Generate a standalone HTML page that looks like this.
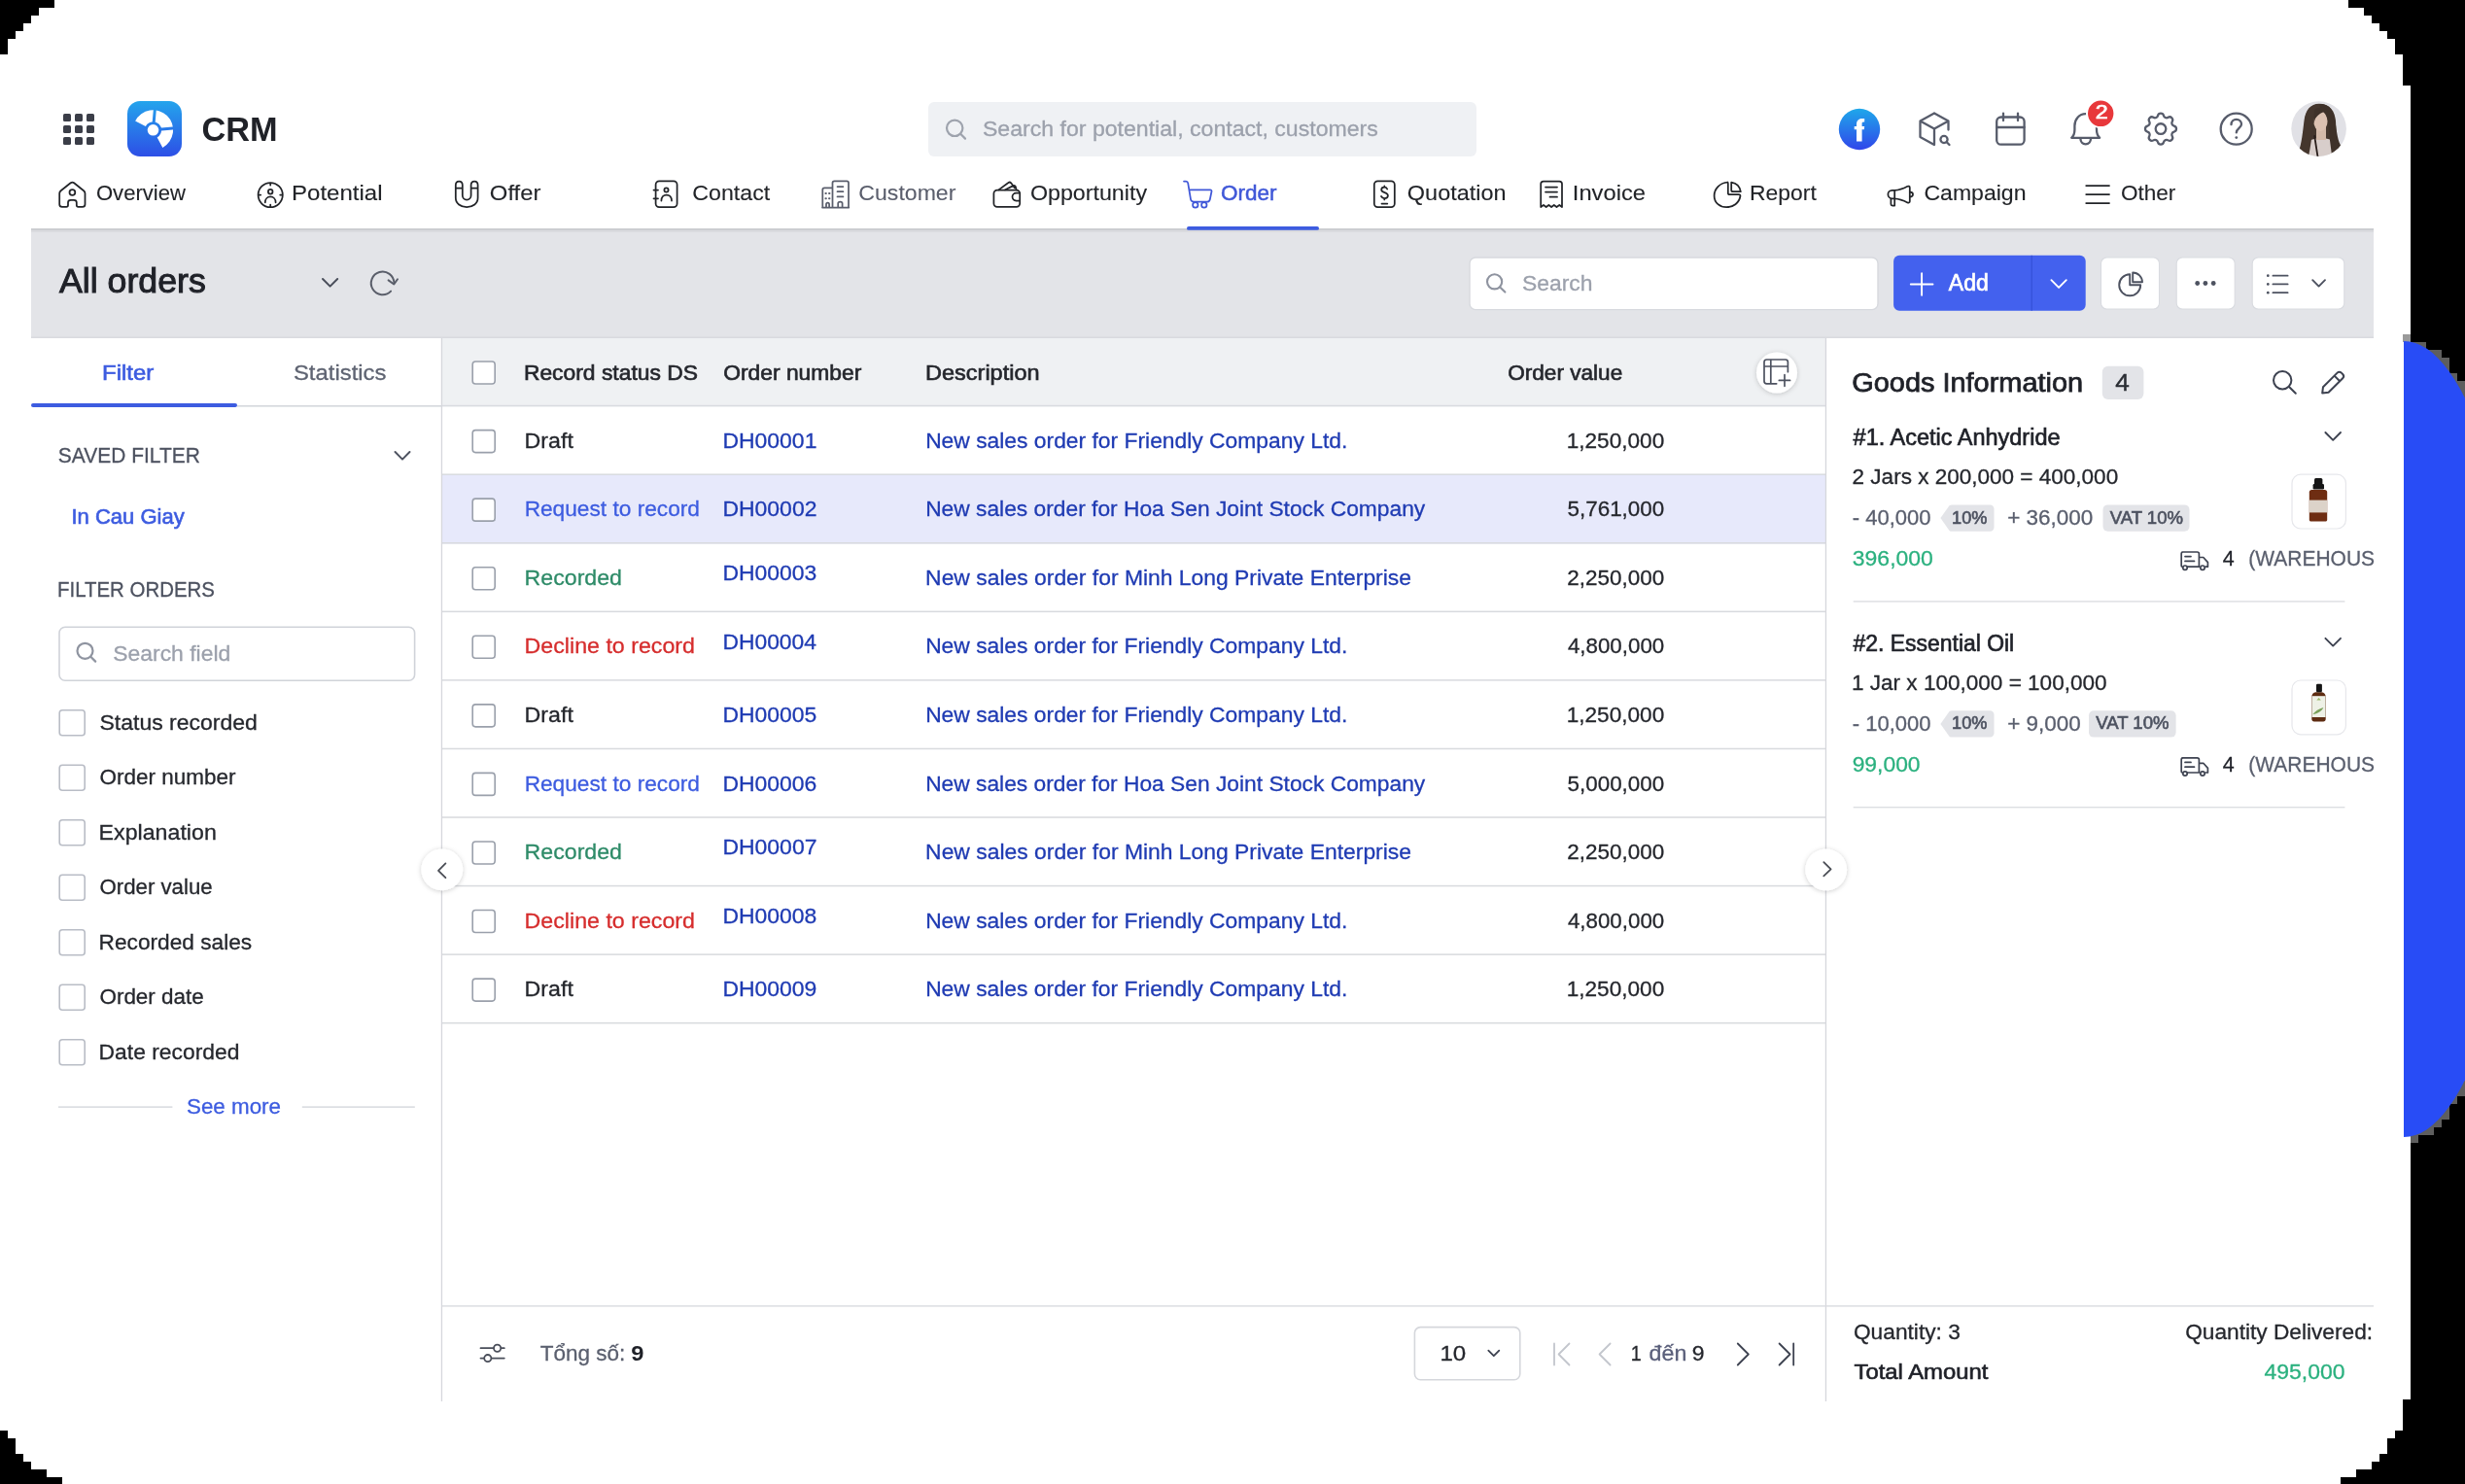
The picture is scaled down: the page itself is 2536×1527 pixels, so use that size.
<!DOCTYPE html>
<html><head><meta charset="utf-8"><title>CRM Orders</title>
<style>html,body{margin:0;padding:0;background:#fff;overflow:hidden;width:2536px;height:1527px}svg{display:block;will-change:transform;font-family:"Liberation Sans",sans-serif}text{white-space:pre}</style>
</head><body>
<svg width="2536" height="1527" viewBox="0 0 2536 1527" font-family='"Liberation Sans", sans-serif'><rect x="0" y="0" width="2536" height="1527" fill="#ffffff"/>
<rect x="0" y="0" width="56" height="8" fill="#000"/>
<rect x="0" y="8" width="40" height="8" fill="#000"/>
<rect x="0" y="16" width="32" height="8" fill="#000"/>
<rect x="0" y="24" width="24" height="8" fill="#000"/>
<rect x="0" y="32" width="16" height="8" fill="#000"/>
<rect x="0" y="40" width="8" height="16" fill="#000"/>
<rect x="0" y="1472" width="8" height="8" fill="#000"/>
<rect x="0" y="1480" width="16" height="16" fill="#000"/>
<rect x="0" y="1496" width="24" height="8" fill="#000"/>
<rect x="0" y="1504" width="32" height="8" fill="#000"/>
<rect x="0" y="1512" width="48" height="8" fill="#000"/>
<rect x="0" y="1520" width="64" height="7" fill="#000"/>
<rect x="2416" y="0" width="120" height="8" fill="#000"/>
<rect x="2432" y="8" width="104" height="8" fill="#000"/>
<rect x="2440" y="16" width="96" height="8" fill="#000"/>
<rect x="2448" y="24" width="88" height="8" fill="#000"/>
<rect x="2456" y="32" width="80" height="8" fill="#000"/>
<rect x="2464" y="40" width="72" height="16" fill="#000"/>
<rect x="2472" y="56" width="64" height="32" fill="#000"/>
<rect x="2480" y="88" width="56" height="1352" fill="#000"/>
<rect x="2472" y="1440" width="64" height="32" fill="#000"/>
<rect x="2464" y="1472" width="72" height="8" fill="#000"/>
<rect x="2456" y="1480" width="80" height="16" fill="#000"/>
<rect x="2448" y="1496" width="88" height="8" fill="#000"/>
<rect x="2440" y="1504" width="96" height="8" fill="#000"/>
<rect x="2424" y="1512" width="112" height="8" fill="#000"/>
<rect x="2408" y="1520" width="128" height="7" fill="#000"/>
<rect x="2480" y="352" width="8" height="8" fill="#5e5e5e"/>
<rect x="2488" y="352" width="8" height="8" fill="#5e5e5e"/>
<rect x="2480" y="360" width="8" height="8" fill="#5e5e5e"/>
<rect x="2488" y="360" width="8" height="8" fill="#5e5e5e"/>
<rect x="2496" y="360" width="8" height="8" fill="#5e5e5e"/>
<rect x="2504" y="360" width="8" height="8" fill="#5e5e5e"/>
<rect x="2480" y="368" width="8" height="8" fill="#5e5e5e"/>
<rect x="2488" y="368" width="8" height="8" fill="#5e5e5e"/>
<rect x="2496" y="368" width="8" height="8" fill="#5e5e5e"/>
<rect x="2504" y="368" width="8" height="8" fill="#5e5e5e"/>
<rect x="2512" y="368" width="8" height="8" fill="#5e5e5e"/>
<rect x="2480" y="376" width="8" height="8" fill="#5e5e5e"/>
<rect x="2488" y="376" width="8" height="8" fill="#5e5e5e"/>
<rect x="2496" y="376" width="8" height="8" fill="#5e5e5e"/>
<rect x="2504" y="376" width="8" height="8" fill="#5e5e5e"/>
<rect x="2512" y="376" width="8" height="8" fill="#5e5e5e"/>
<rect x="2480" y="384" width="8" height="8" fill="#5e5e5e"/>
<rect x="2488" y="384" width="8" height="8" fill="#5e5e5e"/>
<rect x="2496" y="384" width="8" height="8" fill="#5e5e5e"/>
<rect x="2504" y="384" width="8" height="8" fill="#5e5e5e"/>
<rect x="2512" y="384" width="8" height="8" fill="#5e5e5e"/>
<rect x="2520" y="384" width="8" height="8" fill="#5e5e5e"/>
<rect x="2480" y="392" width="8" height="8" fill="#5e5e5e"/>
<rect x="2488" y="392" width="8" height="8" fill="#5e5e5e"/>
<rect x="2496" y="392" width="8" height="8" fill="#5e5e5e"/>
<rect x="2504" y="392" width="8" height="8" fill="#5e5e5e"/>
<rect x="2512" y="392" width="8" height="8" fill="#5e5e5e"/>
<rect x="2520" y="392" width="8" height="8" fill="#5e5e5e"/>
<rect x="2528" y="392" width="8" height="8" fill="#5e5e5e"/>
<rect x="2480" y="400" width="8" height="8" fill="#5e5e5e"/>
<rect x="2488" y="400" width="8" height="8" fill="#5e5e5e"/>
<rect x="2496" y="400" width="8" height="8" fill="#5e5e5e"/>
<rect x="2504" y="400" width="8" height="8" fill="#5e5e5e"/>
<rect x="2512" y="400" width="8" height="8" fill="#5e5e5e"/>
<rect x="2520" y="400" width="8" height="8" fill="#5e5e5e"/>
<rect x="2528" y="400" width="8" height="8" fill="#5e5e5e"/>
<rect x="2480" y="408" width="8" height="8" fill="#5e5e5e"/>
<rect x="2488" y="408" width="8" height="8" fill="#5e5e5e"/>
<rect x="2496" y="408" width="8" height="8" fill="#5e5e5e"/>
<rect x="2504" y="408" width="8" height="8" fill="#5e5e5e"/>
<rect x="2512" y="408" width="8" height="8" fill="#5e5e5e"/>
<rect x="2520" y="408" width="8" height="8" fill="#5e5e5e"/>
<rect x="2528" y="408" width="8" height="8" fill="#5e5e5e"/>
<rect x="2480" y="416" width="8" height="8" fill="#5e5e5e"/>
<rect x="2488" y="416" width="8" height="8" fill="#5e5e5e"/>
<rect x="2496" y="416" width="8" height="8" fill="#5e5e5e"/>
<rect x="2504" y="416" width="8" height="8" fill="#5e5e5e"/>
<rect x="2512" y="416" width="8" height="8" fill="#5e5e5e"/>
<rect x="2520" y="416" width="8" height="8" fill="#5e5e5e"/>
<rect x="2528" y="416" width="8" height="8" fill="#5e5e5e"/>
<rect x="2480" y="424" width="8" height="8" fill="#5e5e5e"/>
<rect x="2488" y="424" width="8" height="8" fill="#5e5e5e"/>
<rect x="2496" y="424" width="8" height="8" fill="#5e5e5e"/>
<rect x="2504" y="424" width="8" height="8" fill="#5e5e5e"/>
<rect x="2512" y="424" width="8" height="8" fill="#5e5e5e"/>
<rect x="2520" y="424" width="8" height="8" fill="#5e5e5e"/>
<rect x="2528" y="424" width="8" height="8" fill="#5e5e5e"/>
<rect x="2480" y="432" width="8" height="8" fill="#5e5e5e"/>
<rect x="2488" y="432" width="8" height="8" fill="#5e5e5e"/>
<rect x="2496" y="432" width="8" height="8" fill="#5e5e5e"/>
<rect x="2504" y="432" width="8" height="8" fill="#5e5e5e"/>
<rect x="2512" y="432" width="8" height="8" fill="#5e5e5e"/>
<rect x="2520" y="432" width="8" height="8" fill="#5e5e5e"/>
<rect x="2528" y="432" width="8" height="8" fill="#5e5e5e"/>
<rect x="2480" y="440" width="8" height="8" fill="#5e5e5e"/>
<rect x="2488" y="440" width="8" height="8" fill="#5e5e5e"/>
<rect x="2496" y="440" width="8" height="8" fill="#5e5e5e"/>
<rect x="2504" y="440" width="8" height="8" fill="#5e5e5e"/>
<rect x="2512" y="440" width="8" height="8" fill="#5e5e5e"/>
<rect x="2520" y="440" width="8" height="8" fill="#5e5e5e"/>
<rect x="2528" y="440" width="8" height="8" fill="#5e5e5e"/>
<rect x="2480" y="448" width="8" height="8" fill="#5e5e5e"/>
<rect x="2488" y="448" width="8" height="8" fill="#5e5e5e"/>
<rect x="2496" y="448" width="8" height="8" fill="#5e5e5e"/>
<rect x="2504" y="448" width="8" height="8" fill="#5e5e5e"/>
<rect x="2512" y="448" width="8" height="8" fill="#5e5e5e"/>
<rect x="2520" y="448" width="8" height="8" fill="#5e5e5e"/>
<rect x="2528" y="448" width="8" height="8" fill="#5e5e5e"/>
<rect x="2480" y="456" width="8" height="8" fill="#5e5e5e"/>
<rect x="2488" y="456" width="8" height="8" fill="#5e5e5e"/>
<rect x="2496" y="456" width="8" height="8" fill="#5e5e5e"/>
<rect x="2504" y="456" width="8" height="8" fill="#5e5e5e"/>
<rect x="2512" y="456" width="8" height="8" fill="#5e5e5e"/>
<rect x="2520" y="456" width="8" height="8" fill="#5e5e5e"/>
<rect x="2528" y="456" width="8" height="8" fill="#5e5e5e"/>
<rect x="2480" y="464" width="8" height="8" fill="#5e5e5e"/>
<rect x="2488" y="464" width="8" height="8" fill="#5e5e5e"/>
<rect x="2496" y="464" width="8" height="8" fill="#5e5e5e"/>
<rect x="2504" y="464" width="8" height="8" fill="#5e5e5e"/>
<rect x="2512" y="464" width="8" height="8" fill="#5e5e5e"/>
<rect x="2520" y="464" width="8" height="8" fill="#5e5e5e"/>
<rect x="2528" y="464" width="8" height="8" fill="#5e5e5e"/>
<rect x="2480" y="472" width="8" height="8" fill="#5e5e5e"/>
<rect x="2488" y="472" width="8" height="8" fill="#5e5e5e"/>
<rect x="2496" y="472" width="8" height="8" fill="#5e5e5e"/>
<rect x="2504" y="472" width="8" height="8" fill="#5e5e5e"/>
<rect x="2512" y="472" width="8" height="8" fill="#5e5e5e"/>
<rect x="2520" y="472" width="8" height="8" fill="#5e5e5e"/>
<rect x="2528" y="472" width="8" height="8" fill="#5e5e5e"/>
<rect x="2480" y="480" width="8" height="8" fill="#5e5e5e"/>
<rect x="2488" y="480" width="8" height="8" fill="#5e5e5e"/>
<rect x="2496" y="480" width="8" height="8" fill="#5e5e5e"/>
<rect x="2504" y="480" width="8" height="8" fill="#5e5e5e"/>
<rect x="2512" y="480" width="8" height="8" fill="#5e5e5e"/>
<rect x="2520" y="480" width="8" height="8" fill="#5e5e5e"/>
<rect x="2528" y="480" width="8" height="8" fill="#5e5e5e"/>
<rect x="2480" y="488" width="8" height="8" fill="#5e5e5e"/>
<rect x="2488" y="488" width="8" height="8" fill="#5e5e5e"/>
<rect x="2496" y="488" width="8" height="8" fill="#5e5e5e"/>
<rect x="2504" y="488" width="8" height="8" fill="#5e5e5e"/>
<rect x="2512" y="488" width="8" height="8" fill="#5e5e5e"/>
<rect x="2520" y="488" width="8" height="8" fill="#5e5e5e"/>
<rect x="2528" y="488" width="8" height="8" fill="#5e5e5e"/>
<rect x="2480" y="496" width="8" height="8" fill="#5e5e5e"/>
<rect x="2488" y="496" width="8" height="8" fill="#5e5e5e"/>
<rect x="2496" y="496" width="8" height="8" fill="#5e5e5e"/>
<rect x="2504" y="496" width="8" height="8" fill="#5e5e5e"/>
<rect x="2512" y="496" width="8" height="8" fill="#5e5e5e"/>
<rect x="2520" y="496" width="8" height="8" fill="#5e5e5e"/>
<rect x="2528" y="496" width="8" height="8" fill="#5e5e5e"/>
<rect x="2480" y="504" width="8" height="8" fill="#5e5e5e"/>
<rect x="2488" y="504" width="8" height="8" fill="#5e5e5e"/>
<rect x="2496" y="504" width="8" height="8" fill="#5e5e5e"/>
<rect x="2504" y="504" width="8" height="8" fill="#5e5e5e"/>
<rect x="2512" y="504" width="8" height="8" fill="#5e5e5e"/>
<rect x="2520" y="504" width="8" height="8" fill="#5e5e5e"/>
<rect x="2528" y="504" width="8" height="8" fill="#5e5e5e"/>
<rect x="2480" y="512" width="8" height="8" fill="#5e5e5e"/>
<rect x="2488" y="512" width="8" height="8" fill="#5e5e5e"/>
<rect x="2496" y="512" width="8" height="8" fill="#5e5e5e"/>
<rect x="2504" y="512" width="8" height="8" fill="#5e5e5e"/>
<rect x="2512" y="512" width="8" height="8" fill="#5e5e5e"/>
<rect x="2520" y="512" width="8" height="8" fill="#5e5e5e"/>
<rect x="2528" y="512" width="8" height="8" fill="#5e5e5e"/>
<rect x="2480" y="520" width="8" height="8" fill="#5e5e5e"/>
<rect x="2488" y="520" width="8" height="8" fill="#5e5e5e"/>
<rect x="2496" y="520" width="8" height="8" fill="#5e5e5e"/>
<rect x="2504" y="520" width="8" height="8" fill="#5e5e5e"/>
<rect x="2512" y="520" width="8" height="8" fill="#5e5e5e"/>
<rect x="2520" y="520" width="8" height="8" fill="#5e5e5e"/>
<rect x="2528" y="520" width="8" height="8" fill="#5e5e5e"/>
<rect x="2480" y="528" width="8" height="8" fill="#5e5e5e"/>
<rect x="2488" y="528" width="8" height="8" fill="#5e5e5e"/>
<rect x="2496" y="528" width="8" height="8" fill="#5e5e5e"/>
<rect x="2504" y="528" width="8" height="8" fill="#5e5e5e"/>
<rect x="2512" y="528" width="8" height="8" fill="#5e5e5e"/>
<rect x="2520" y="528" width="8" height="8" fill="#5e5e5e"/>
<rect x="2528" y="528" width="8" height="8" fill="#5e5e5e"/>
<rect x="2480" y="536" width="8" height="8" fill="#5e5e5e"/>
<rect x="2488" y="536" width="8" height="8" fill="#5e5e5e"/>
<rect x="2496" y="536" width="8" height="8" fill="#5e5e5e"/>
<rect x="2504" y="536" width="8" height="8" fill="#5e5e5e"/>
<rect x="2512" y="536" width="8" height="8" fill="#5e5e5e"/>
<rect x="2520" y="536" width="8" height="8" fill="#5e5e5e"/>
<rect x="2528" y="536" width="8" height="8" fill="#5e5e5e"/>
<rect x="2480" y="544" width="8" height="8" fill="#5e5e5e"/>
<rect x="2488" y="544" width="8" height="8" fill="#5e5e5e"/>
<rect x="2496" y="544" width="8" height="8" fill="#5e5e5e"/>
<rect x="2504" y="544" width="8" height="8" fill="#5e5e5e"/>
<rect x="2512" y="544" width="8" height="8" fill="#5e5e5e"/>
<rect x="2520" y="544" width="8" height="8" fill="#5e5e5e"/>
<rect x="2528" y="544" width="8" height="8" fill="#5e5e5e"/>
<rect x="2480" y="552" width="8" height="8" fill="#5e5e5e"/>
<rect x="2488" y="552" width="8" height="8" fill="#5e5e5e"/>
<rect x="2496" y="552" width="8" height="8" fill="#5e5e5e"/>
<rect x="2504" y="552" width="8" height="8" fill="#5e5e5e"/>
<rect x="2512" y="552" width="8" height="8" fill="#5e5e5e"/>
<rect x="2520" y="552" width="8" height="8" fill="#5e5e5e"/>
<rect x="2528" y="552" width="8" height="8" fill="#5e5e5e"/>
<rect x="2480" y="560" width="8" height="8" fill="#5e5e5e"/>
<rect x="2488" y="560" width="8" height="8" fill="#5e5e5e"/>
<rect x="2496" y="560" width="8" height="8" fill="#5e5e5e"/>
<rect x="2504" y="560" width="8" height="8" fill="#5e5e5e"/>
<rect x="2512" y="560" width="8" height="8" fill="#5e5e5e"/>
<rect x="2520" y="560" width="8" height="8" fill="#5e5e5e"/>
<rect x="2528" y="560" width="8" height="8" fill="#5e5e5e"/>
<rect x="2480" y="568" width="8" height="8" fill="#5e5e5e"/>
<rect x="2488" y="568" width="8" height="8" fill="#5e5e5e"/>
<rect x="2496" y="568" width="8" height="8" fill="#5e5e5e"/>
<rect x="2504" y="568" width="8" height="8" fill="#5e5e5e"/>
<rect x="2512" y="568" width="8" height="8" fill="#5e5e5e"/>
<rect x="2520" y="568" width="8" height="8" fill="#5e5e5e"/>
<rect x="2528" y="568" width="8" height="8" fill="#5e5e5e"/>
<rect x="2480" y="576" width="8" height="8" fill="#5e5e5e"/>
<rect x="2488" y="576" width="8" height="8" fill="#5e5e5e"/>
<rect x="2496" y="576" width="8" height="8" fill="#5e5e5e"/>
<rect x="2504" y="576" width="8" height="8" fill="#5e5e5e"/>
<rect x="2512" y="576" width="8" height="8" fill="#5e5e5e"/>
<rect x="2520" y="576" width="8" height="8" fill="#5e5e5e"/>
<rect x="2528" y="576" width="8" height="8" fill="#5e5e5e"/>
<rect x="2480" y="584" width="8" height="8" fill="#5e5e5e"/>
<rect x="2488" y="584" width="8" height="8" fill="#5e5e5e"/>
<rect x="2496" y="584" width="8" height="8" fill="#5e5e5e"/>
<rect x="2504" y="584" width="8" height="8" fill="#5e5e5e"/>
<rect x="2512" y="584" width="8" height="8" fill="#5e5e5e"/>
<rect x="2520" y="584" width="8" height="8" fill="#5e5e5e"/>
<rect x="2528" y="584" width="8" height="8" fill="#5e5e5e"/>
<rect x="2480" y="592" width="8" height="8" fill="#5e5e5e"/>
<rect x="2488" y="592" width="8" height="8" fill="#5e5e5e"/>
<rect x="2496" y="592" width="8" height="8" fill="#5e5e5e"/>
<rect x="2504" y="592" width="8" height="8" fill="#5e5e5e"/>
<rect x="2512" y="592" width="8" height="8" fill="#5e5e5e"/>
<rect x="2520" y="592" width="8" height="8" fill="#5e5e5e"/>
<rect x="2528" y="592" width="8" height="8" fill="#5e5e5e"/>
<rect x="2480" y="600" width="8" height="8" fill="#5e5e5e"/>
<rect x="2488" y="600" width="8" height="8" fill="#5e5e5e"/>
<rect x="2496" y="600" width="8" height="8" fill="#5e5e5e"/>
<rect x="2504" y="600" width="8" height="8" fill="#5e5e5e"/>
<rect x="2512" y="600" width="8" height="8" fill="#5e5e5e"/>
<rect x="2520" y="600" width="8" height="8" fill="#5e5e5e"/>
<rect x="2528" y="600" width="8" height="8" fill="#5e5e5e"/>
<rect x="2480" y="608" width="8" height="8" fill="#5e5e5e"/>
<rect x="2488" y="608" width="8" height="8" fill="#5e5e5e"/>
<rect x="2496" y="608" width="8" height="8" fill="#5e5e5e"/>
<rect x="2504" y="608" width="8" height="8" fill="#5e5e5e"/>
<rect x="2512" y="608" width="8" height="8" fill="#5e5e5e"/>
<rect x="2520" y="608" width="8" height="8" fill="#5e5e5e"/>
<rect x="2528" y="608" width="8" height="8" fill="#5e5e5e"/>
<rect x="2480" y="616" width="8" height="8" fill="#5e5e5e"/>
<rect x="2488" y="616" width="8" height="8" fill="#5e5e5e"/>
<rect x="2496" y="616" width="8" height="8" fill="#5e5e5e"/>
<rect x="2504" y="616" width="8" height="8" fill="#5e5e5e"/>
<rect x="2512" y="616" width="8" height="8" fill="#5e5e5e"/>
<rect x="2520" y="616" width="8" height="8" fill="#5e5e5e"/>
<rect x="2528" y="616" width="8" height="8" fill="#5e5e5e"/>
<rect x="2480" y="624" width="8" height="8" fill="#5e5e5e"/>
<rect x="2488" y="624" width="8" height="8" fill="#5e5e5e"/>
<rect x="2496" y="624" width="8" height="8" fill="#5e5e5e"/>
<rect x="2504" y="624" width="8" height="8" fill="#5e5e5e"/>
<rect x="2512" y="624" width="8" height="8" fill="#5e5e5e"/>
<rect x="2520" y="624" width="8" height="8" fill="#5e5e5e"/>
<rect x="2528" y="624" width="8" height="8" fill="#5e5e5e"/>
<rect x="2480" y="632" width="8" height="8" fill="#5e5e5e"/>
<rect x="2488" y="632" width="8" height="8" fill="#5e5e5e"/>
<rect x="2496" y="632" width="8" height="8" fill="#5e5e5e"/>
<rect x="2504" y="632" width="8" height="8" fill="#5e5e5e"/>
<rect x="2512" y="632" width="8" height="8" fill="#5e5e5e"/>
<rect x="2520" y="632" width="8" height="8" fill="#5e5e5e"/>
<rect x="2528" y="632" width="8" height="8" fill="#5e5e5e"/>
<rect x="2480" y="640" width="8" height="8" fill="#5e5e5e"/>
<rect x="2488" y="640" width="8" height="8" fill="#5e5e5e"/>
<rect x="2496" y="640" width="8" height="8" fill="#5e5e5e"/>
<rect x="2504" y="640" width="8" height="8" fill="#5e5e5e"/>
<rect x="2512" y="640" width="8" height="8" fill="#5e5e5e"/>
<rect x="2520" y="640" width="8" height="8" fill="#5e5e5e"/>
<rect x="2528" y="640" width="8" height="8" fill="#5e5e5e"/>
<rect x="2480" y="648" width="8" height="8" fill="#5e5e5e"/>
<rect x="2488" y="648" width="8" height="8" fill="#5e5e5e"/>
<rect x="2496" y="648" width="8" height="8" fill="#5e5e5e"/>
<rect x="2504" y="648" width="8" height="8" fill="#5e5e5e"/>
<rect x="2512" y="648" width="8" height="8" fill="#5e5e5e"/>
<rect x="2520" y="648" width="8" height="8" fill="#5e5e5e"/>
<rect x="2528" y="648" width="8" height="8" fill="#5e5e5e"/>
<rect x="2480" y="656" width="8" height="8" fill="#5e5e5e"/>
<rect x="2488" y="656" width="8" height="8" fill="#5e5e5e"/>
<rect x="2496" y="656" width="8" height="8" fill="#5e5e5e"/>
<rect x="2504" y="656" width="8" height="8" fill="#5e5e5e"/>
<rect x="2512" y="656" width="8" height="8" fill="#5e5e5e"/>
<rect x="2520" y="656" width="8" height="8" fill="#5e5e5e"/>
<rect x="2528" y="656" width="8" height="8" fill="#5e5e5e"/>
<rect x="2480" y="664" width="8" height="8" fill="#5e5e5e"/>
<rect x="2488" y="664" width="8" height="8" fill="#5e5e5e"/>
<rect x="2496" y="664" width="8" height="8" fill="#5e5e5e"/>
<rect x="2504" y="664" width="8" height="8" fill="#5e5e5e"/>
<rect x="2512" y="664" width="8" height="8" fill="#5e5e5e"/>
<rect x="2520" y="664" width="8" height="8" fill="#5e5e5e"/>
<rect x="2528" y="664" width="8" height="8" fill="#5e5e5e"/>
<rect x="2480" y="672" width="8" height="8" fill="#5e5e5e"/>
<rect x="2488" y="672" width="8" height="8" fill="#5e5e5e"/>
<rect x="2496" y="672" width="8" height="8" fill="#5e5e5e"/>
<rect x="2504" y="672" width="8" height="8" fill="#5e5e5e"/>
<rect x="2512" y="672" width="8" height="8" fill="#5e5e5e"/>
<rect x="2520" y="672" width="8" height="8" fill="#5e5e5e"/>
<rect x="2528" y="672" width="8" height="8" fill="#5e5e5e"/>
<rect x="2480" y="680" width="8" height="8" fill="#5e5e5e"/>
<rect x="2488" y="680" width="8" height="8" fill="#5e5e5e"/>
<rect x="2496" y="680" width="8" height="8" fill="#5e5e5e"/>
<rect x="2504" y="680" width="8" height="8" fill="#5e5e5e"/>
<rect x="2512" y="680" width="8" height="8" fill="#5e5e5e"/>
<rect x="2520" y="680" width="8" height="8" fill="#5e5e5e"/>
<rect x="2528" y="680" width="8" height="8" fill="#5e5e5e"/>
<rect x="2480" y="688" width="8" height="8" fill="#5e5e5e"/>
<rect x="2488" y="688" width="8" height="8" fill="#5e5e5e"/>
<rect x="2496" y="688" width="8" height="8" fill="#5e5e5e"/>
<rect x="2504" y="688" width="8" height="8" fill="#5e5e5e"/>
<rect x="2512" y="688" width="8" height="8" fill="#5e5e5e"/>
<rect x="2520" y="688" width="8" height="8" fill="#5e5e5e"/>
<rect x="2528" y="688" width="8" height="8" fill="#5e5e5e"/>
<rect x="2480" y="696" width="8" height="8" fill="#5e5e5e"/>
<rect x="2488" y="696" width="8" height="8" fill="#5e5e5e"/>
<rect x="2496" y="696" width="8" height="8" fill="#5e5e5e"/>
<rect x="2504" y="696" width="8" height="8" fill="#5e5e5e"/>
<rect x="2512" y="696" width="8" height="8" fill="#5e5e5e"/>
<rect x="2520" y="696" width="8" height="8" fill="#5e5e5e"/>
<rect x="2528" y="696" width="8" height="8" fill="#5e5e5e"/>
<rect x="2480" y="704" width="8" height="8" fill="#5e5e5e"/>
<rect x="2488" y="704" width="8" height="8" fill="#5e5e5e"/>
<rect x="2496" y="704" width="8" height="8" fill="#5e5e5e"/>
<rect x="2504" y="704" width="8" height="8" fill="#5e5e5e"/>
<rect x="2512" y="704" width="8" height="8" fill="#5e5e5e"/>
<rect x="2520" y="704" width="8" height="8" fill="#5e5e5e"/>
<rect x="2528" y="704" width="8" height="8" fill="#5e5e5e"/>
<rect x="2480" y="712" width="8" height="8" fill="#5e5e5e"/>
<rect x="2488" y="712" width="8" height="8" fill="#5e5e5e"/>
<rect x="2496" y="712" width="8" height="8" fill="#5e5e5e"/>
<rect x="2504" y="712" width="8" height="8" fill="#5e5e5e"/>
<rect x="2512" y="712" width="8" height="8" fill="#5e5e5e"/>
<rect x="2520" y="712" width="8" height="8" fill="#5e5e5e"/>
<rect x="2528" y="712" width="8" height="8" fill="#5e5e5e"/>
<rect x="2480" y="720" width="8" height="8" fill="#5e5e5e"/>
<rect x="2488" y="720" width="8" height="8" fill="#5e5e5e"/>
<rect x="2496" y="720" width="8" height="8" fill="#5e5e5e"/>
<rect x="2504" y="720" width="8" height="8" fill="#5e5e5e"/>
<rect x="2512" y="720" width="8" height="8" fill="#5e5e5e"/>
<rect x="2520" y="720" width="8" height="8" fill="#5e5e5e"/>
<rect x="2528" y="720" width="8" height="8" fill="#5e5e5e"/>
<rect x="2480" y="728" width="8" height="8" fill="#5e5e5e"/>
<rect x="2488" y="728" width="8" height="8" fill="#5e5e5e"/>
<rect x="2496" y="728" width="8" height="8" fill="#5e5e5e"/>
<rect x="2504" y="728" width="8" height="8" fill="#5e5e5e"/>
<rect x="2512" y="728" width="8" height="8" fill="#5e5e5e"/>
<rect x="2520" y="728" width="8" height="8" fill="#5e5e5e"/>
<rect x="2528" y="728" width="8" height="8" fill="#5e5e5e"/>
<rect x="2480" y="736" width="8" height="8" fill="#5e5e5e"/>
<rect x="2488" y="736" width="8" height="8" fill="#5e5e5e"/>
<rect x="2496" y="736" width="8" height="8" fill="#5e5e5e"/>
<rect x="2504" y="736" width="8" height="8" fill="#5e5e5e"/>
<rect x="2512" y="736" width="8" height="8" fill="#5e5e5e"/>
<rect x="2520" y="736" width="8" height="8" fill="#5e5e5e"/>
<rect x="2528" y="736" width="8" height="8" fill="#5e5e5e"/>
<rect x="2480" y="744" width="8" height="8" fill="#5e5e5e"/>
<rect x="2488" y="744" width="8" height="8" fill="#5e5e5e"/>
<rect x="2496" y="744" width="8" height="8" fill="#5e5e5e"/>
<rect x="2504" y="744" width="8" height="8" fill="#5e5e5e"/>
<rect x="2512" y="744" width="8" height="8" fill="#5e5e5e"/>
<rect x="2520" y="744" width="8" height="8" fill="#5e5e5e"/>
<rect x="2528" y="744" width="8" height="8" fill="#5e5e5e"/>
<rect x="2480" y="752" width="8" height="8" fill="#5e5e5e"/>
<rect x="2488" y="752" width="8" height="8" fill="#5e5e5e"/>
<rect x="2496" y="752" width="8" height="8" fill="#5e5e5e"/>
<rect x="2504" y="752" width="8" height="8" fill="#5e5e5e"/>
<rect x="2512" y="752" width="8" height="8" fill="#5e5e5e"/>
<rect x="2520" y="752" width="8" height="8" fill="#5e5e5e"/>
<rect x="2528" y="752" width="8" height="8" fill="#5e5e5e"/>
<rect x="2480" y="760" width="8" height="8" fill="#5e5e5e"/>
<rect x="2488" y="760" width="8" height="8" fill="#5e5e5e"/>
<rect x="2496" y="760" width="8" height="8" fill="#5e5e5e"/>
<rect x="2504" y="760" width="8" height="8" fill="#5e5e5e"/>
<rect x="2512" y="760" width="8" height="8" fill="#5e5e5e"/>
<rect x="2520" y="760" width="8" height="8" fill="#5e5e5e"/>
<rect x="2528" y="760" width="8" height="8" fill="#5e5e5e"/>
<rect x="2480" y="768" width="8" height="8" fill="#5e5e5e"/>
<rect x="2488" y="768" width="8" height="8" fill="#5e5e5e"/>
<rect x="2496" y="768" width="8" height="8" fill="#5e5e5e"/>
<rect x="2504" y="768" width="8" height="8" fill="#5e5e5e"/>
<rect x="2512" y="768" width="8" height="8" fill="#5e5e5e"/>
<rect x="2520" y="768" width="8" height="8" fill="#5e5e5e"/>
<rect x="2528" y="768" width="8" height="8" fill="#5e5e5e"/>
<rect x="2480" y="776" width="8" height="8" fill="#5e5e5e"/>
<rect x="2488" y="776" width="8" height="8" fill="#5e5e5e"/>
<rect x="2496" y="776" width="8" height="8" fill="#5e5e5e"/>
<rect x="2504" y="776" width="8" height="8" fill="#5e5e5e"/>
<rect x="2512" y="776" width="8" height="8" fill="#5e5e5e"/>
<rect x="2520" y="776" width="8" height="8" fill="#5e5e5e"/>
<rect x="2528" y="776" width="8" height="8" fill="#5e5e5e"/>
<rect x="2480" y="784" width="8" height="8" fill="#5e5e5e"/>
<rect x="2488" y="784" width="8" height="8" fill="#5e5e5e"/>
<rect x="2496" y="784" width="8" height="8" fill="#5e5e5e"/>
<rect x="2504" y="784" width="8" height="8" fill="#5e5e5e"/>
<rect x="2512" y="784" width="8" height="8" fill="#5e5e5e"/>
<rect x="2520" y="784" width="8" height="8" fill="#5e5e5e"/>
<rect x="2528" y="784" width="8" height="8" fill="#5e5e5e"/>
<rect x="2480" y="792" width="8" height="8" fill="#5e5e5e"/>
<rect x="2488" y="792" width="8" height="8" fill="#5e5e5e"/>
<rect x="2496" y="792" width="8" height="8" fill="#5e5e5e"/>
<rect x="2504" y="792" width="8" height="8" fill="#5e5e5e"/>
<rect x="2512" y="792" width="8" height="8" fill="#5e5e5e"/>
<rect x="2520" y="792" width="8" height="8" fill="#5e5e5e"/>
<rect x="2528" y="792" width="8" height="8" fill="#5e5e5e"/>
<rect x="2480" y="800" width="8" height="8" fill="#5e5e5e"/>
<rect x="2488" y="800" width="8" height="8" fill="#5e5e5e"/>
<rect x="2496" y="800" width="8" height="8" fill="#5e5e5e"/>
<rect x="2504" y="800" width="8" height="8" fill="#5e5e5e"/>
<rect x="2512" y="800" width="8" height="8" fill="#5e5e5e"/>
<rect x="2520" y="800" width="8" height="8" fill="#5e5e5e"/>
<rect x="2528" y="800" width="8" height="8" fill="#5e5e5e"/>
<rect x="2480" y="808" width="8" height="8" fill="#5e5e5e"/>
<rect x="2488" y="808" width="8" height="8" fill="#5e5e5e"/>
<rect x="2496" y="808" width="8" height="8" fill="#5e5e5e"/>
<rect x="2504" y="808" width="8" height="8" fill="#5e5e5e"/>
<rect x="2512" y="808" width="8" height="8" fill="#5e5e5e"/>
<rect x="2520" y="808" width="8" height="8" fill="#5e5e5e"/>
<rect x="2528" y="808" width="8" height="8" fill="#5e5e5e"/>
<rect x="2480" y="816" width="8" height="8" fill="#5e5e5e"/>
<rect x="2488" y="816" width="8" height="8" fill="#5e5e5e"/>
<rect x="2496" y="816" width="8" height="8" fill="#5e5e5e"/>
<rect x="2504" y="816" width="8" height="8" fill="#5e5e5e"/>
<rect x="2512" y="816" width="8" height="8" fill="#5e5e5e"/>
<rect x="2520" y="816" width="8" height="8" fill="#5e5e5e"/>
<rect x="2528" y="816" width="8" height="8" fill="#5e5e5e"/>
<rect x="2480" y="824" width="8" height="8" fill="#5e5e5e"/>
<rect x="2488" y="824" width="8" height="8" fill="#5e5e5e"/>
<rect x="2496" y="824" width="8" height="8" fill="#5e5e5e"/>
<rect x="2504" y="824" width="8" height="8" fill="#5e5e5e"/>
<rect x="2512" y="824" width="8" height="8" fill="#5e5e5e"/>
<rect x="2520" y="824" width="8" height="8" fill="#5e5e5e"/>
<rect x="2528" y="824" width="8" height="8" fill="#5e5e5e"/>
<rect x="2480" y="832" width="8" height="8" fill="#5e5e5e"/>
<rect x="2488" y="832" width="8" height="8" fill="#5e5e5e"/>
<rect x="2496" y="832" width="8" height="8" fill="#5e5e5e"/>
<rect x="2504" y="832" width="8" height="8" fill="#5e5e5e"/>
<rect x="2512" y="832" width="8" height="8" fill="#5e5e5e"/>
<rect x="2520" y="832" width="8" height="8" fill="#5e5e5e"/>
<rect x="2528" y="832" width="8" height="8" fill="#5e5e5e"/>
<rect x="2480" y="840" width="8" height="8" fill="#5e5e5e"/>
<rect x="2488" y="840" width="8" height="8" fill="#5e5e5e"/>
<rect x="2496" y="840" width="8" height="8" fill="#5e5e5e"/>
<rect x="2504" y="840" width="8" height="8" fill="#5e5e5e"/>
<rect x="2512" y="840" width="8" height="8" fill="#5e5e5e"/>
<rect x="2520" y="840" width="8" height="8" fill="#5e5e5e"/>
<rect x="2528" y="840" width="8" height="8" fill="#5e5e5e"/>
<rect x="2480" y="848" width="8" height="8" fill="#5e5e5e"/>
<rect x="2488" y="848" width="8" height="8" fill="#5e5e5e"/>
<rect x="2496" y="848" width="8" height="8" fill="#5e5e5e"/>
<rect x="2504" y="848" width="8" height="8" fill="#5e5e5e"/>
<rect x="2512" y="848" width="8" height="8" fill="#5e5e5e"/>
<rect x="2520" y="848" width="8" height="8" fill="#5e5e5e"/>
<rect x="2528" y="848" width="8" height="8" fill="#5e5e5e"/>
<rect x="2480" y="856" width="8" height="8" fill="#5e5e5e"/>
<rect x="2488" y="856" width="8" height="8" fill="#5e5e5e"/>
<rect x="2496" y="856" width="8" height="8" fill="#5e5e5e"/>
<rect x="2504" y="856" width="8" height="8" fill="#5e5e5e"/>
<rect x="2512" y="856" width="8" height="8" fill="#5e5e5e"/>
<rect x="2520" y="856" width="8" height="8" fill="#5e5e5e"/>
<rect x="2528" y="856" width="8" height="8" fill="#5e5e5e"/>
<rect x="2480" y="864" width="8" height="8" fill="#5e5e5e"/>
<rect x="2488" y="864" width="8" height="8" fill="#5e5e5e"/>
<rect x="2496" y="864" width="8" height="8" fill="#5e5e5e"/>
<rect x="2504" y="864" width="8" height="8" fill="#5e5e5e"/>
<rect x="2512" y="864" width="8" height="8" fill="#5e5e5e"/>
<rect x="2520" y="864" width="8" height="8" fill="#5e5e5e"/>
<rect x="2528" y="864" width="8" height="8" fill="#5e5e5e"/>
<rect x="2480" y="872" width="8" height="8" fill="#5e5e5e"/>
<rect x="2488" y="872" width="8" height="8" fill="#5e5e5e"/>
<rect x="2496" y="872" width="8" height="8" fill="#5e5e5e"/>
<rect x="2504" y="872" width="8" height="8" fill="#5e5e5e"/>
<rect x="2512" y="872" width="8" height="8" fill="#5e5e5e"/>
<rect x="2520" y="872" width="8" height="8" fill="#5e5e5e"/>
<rect x="2528" y="872" width="8" height="8" fill="#5e5e5e"/>
<rect x="2480" y="880" width="8" height="8" fill="#5e5e5e"/>
<rect x="2488" y="880" width="8" height="8" fill="#5e5e5e"/>
<rect x="2496" y="880" width="8" height="8" fill="#5e5e5e"/>
<rect x="2504" y="880" width="8" height="8" fill="#5e5e5e"/>
<rect x="2512" y="880" width="8" height="8" fill="#5e5e5e"/>
<rect x="2520" y="880" width="8" height="8" fill="#5e5e5e"/>
<rect x="2528" y="880" width="8" height="8" fill="#5e5e5e"/>
<rect x="2480" y="888" width="8" height="8" fill="#5e5e5e"/>
<rect x="2488" y="888" width="8" height="8" fill="#5e5e5e"/>
<rect x="2496" y="888" width="8" height="8" fill="#5e5e5e"/>
<rect x="2504" y="888" width="8" height="8" fill="#5e5e5e"/>
<rect x="2512" y="888" width="8" height="8" fill="#5e5e5e"/>
<rect x="2520" y="888" width="8" height="8" fill="#5e5e5e"/>
<rect x="2528" y="888" width="8" height="8" fill="#5e5e5e"/>
<rect x="2480" y="896" width="8" height="8" fill="#5e5e5e"/>
<rect x="2488" y="896" width="8" height="8" fill="#5e5e5e"/>
<rect x="2496" y="896" width="8" height="8" fill="#5e5e5e"/>
<rect x="2504" y="896" width="8" height="8" fill="#5e5e5e"/>
<rect x="2512" y="896" width="8" height="8" fill="#5e5e5e"/>
<rect x="2520" y="896" width="8" height="8" fill="#5e5e5e"/>
<rect x="2528" y="896" width="8" height="8" fill="#5e5e5e"/>
<rect x="2480" y="904" width="8" height="8" fill="#5e5e5e"/>
<rect x="2488" y="904" width="8" height="8" fill="#5e5e5e"/>
<rect x="2496" y="904" width="8" height="8" fill="#5e5e5e"/>
<rect x="2504" y="904" width="8" height="8" fill="#5e5e5e"/>
<rect x="2512" y="904" width="8" height="8" fill="#5e5e5e"/>
<rect x="2520" y="904" width="8" height="8" fill="#5e5e5e"/>
<rect x="2528" y="904" width="8" height="8" fill="#5e5e5e"/>
<rect x="2480" y="912" width="8" height="8" fill="#5e5e5e"/>
<rect x="2488" y="912" width="8" height="8" fill="#5e5e5e"/>
<rect x="2496" y="912" width="8" height="8" fill="#5e5e5e"/>
<rect x="2504" y="912" width="8" height="8" fill="#5e5e5e"/>
<rect x="2512" y="912" width="8" height="8" fill="#5e5e5e"/>
<rect x="2520" y="912" width="8" height="8" fill="#5e5e5e"/>
<rect x="2528" y="912" width="8" height="8" fill="#5e5e5e"/>
<rect x="2480" y="920" width="8" height="8" fill="#5e5e5e"/>
<rect x="2488" y="920" width="8" height="8" fill="#5e5e5e"/>
<rect x="2496" y="920" width="8" height="8" fill="#5e5e5e"/>
<rect x="2504" y="920" width="8" height="8" fill="#5e5e5e"/>
<rect x="2512" y="920" width="8" height="8" fill="#5e5e5e"/>
<rect x="2520" y="920" width="8" height="8" fill="#5e5e5e"/>
<rect x="2528" y="920" width="8" height="8" fill="#5e5e5e"/>
<rect x="2480" y="928" width="8" height="8" fill="#5e5e5e"/>
<rect x="2488" y="928" width="8" height="8" fill="#5e5e5e"/>
<rect x="2496" y="928" width="8" height="8" fill="#5e5e5e"/>
<rect x="2504" y="928" width="8" height="8" fill="#5e5e5e"/>
<rect x="2512" y="928" width="8" height="8" fill="#5e5e5e"/>
<rect x="2520" y="928" width="8" height="8" fill="#5e5e5e"/>
<rect x="2528" y="928" width="8" height="8" fill="#5e5e5e"/>
<rect x="2480" y="936" width="8" height="8" fill="#5e5e5e"/>
<rect x="2488" y="936" width="8" height="8" fill="#5e5e5e"/>
<rect x="2496" y="936" width="8" height="8" fill="#5e5e5e"/>
<rect x="2504" y="936" width="8" height="8" fill="#5e5e5e"/>
<rect x="2512" y="936" width="8" height="8" fill="#5e5e5e"/>
<rect x="2520" y="936" width="8" height="8" fill="#5e5e5e"/>
<rect x="2528" y="936" width="8" height="8" fill="#5e5e5e"/>
<rect x="2480" y="944" width="8" height="8" fill="#5e5e5e"/>
<rect x="2488" y="944" width="8" height="8" fill="#5e5e5e"/>
<rect x="2496" y="944" width="8" height="8" fill="#5e5e5e"/>
<rect x="2504" y="944" width="8" height="8" fill="#5e5e5e"/>
<rect x="2512" y="944" width="8" height="8" fill="#5e5e5e"/>
<rect x="2520" y="944" width="8" height="8" fill="#5e5e5e"/>
<rect x="2528" y="944" width="8" height="8" fill="#5e5e5e"/>
<rect x="2480" y="952" width="8" height="8" fill="#5e5e5e"/>
<rect x="2488" y="952" width="8" height="8" fill="#5e5e5e"/>
<rect x="2496" y="952" width="8" height="8" fill="#5e5e5e"/>
<rect x="2504" y="952" width="8" height="8" fill="#5e5e5e"/>
<rect x="2512" y="952" width="8" height="8" fill="#5e5e5e"/>
<rect x="2520" y="952" width="8" height="8" fill="#5e5e5e"/>
<rect x="2528" y="952" width="8" height="8" fill="#5e5e5e"/>
<rect x="2480" y="960" width="8" height="8" fill="#5e5e5e"/>
<rect x="2488" y="960" width="8" height="8" fill="#5e5e5e"/>
<rect x="2496" y="960" width="8" height="8" fill="#5e5e5e"/>
<rect x="2504" y="960" width="8" height="8" fill="#5e5e5e"/>
<rect x="2512" y="960" width="8" height="8" fill="#5e5e5e"/>
<rect x="2520" y="960" width="8" height="8" fill="#5e5e5e"/>
<rect x="2528" y="960" width="8" height="8" fill="#5e5e5e"/>
<rect x="2480" y="968" width="8" height="8" fill="#5e5e5e"/>
<rect x="2488" y="968" width="8" height="8" fill="#5e5e5e"/>
<rect x="2496" y="968" width="8" height="8" fill="#5e5e5e"/>
<rect x="2504" y="968" width="8" height="8" fill="#5e5e5e"/>
<rect x="2512" y="968" width="8" height="8" fill="#5e5e5e"/>
<rect x="2520" y="968" width="8" height="8" fill="#5e5e5e"/>
<rect x="2528" y="968" width="8" height="8" fill="#5e5e5e"/>
<rect x="2480" y="976" width="8" height="8" fill="#5e5e5e"/>
<rect x="2488" y="976" width="8" height="8" fill="#5e5e5e"/>
<rect x="2496" y="976" width="8" height="8" fill="#5e5e5e"/>
<rect x="2504" y="976" width="8" height="8" fill="#5e5e5e"/>
<rect x="2512" y="976" width="8" height="8" fill="#5e5e5e"/>
<rect x="2520" y="976" width="8" height="8" fill="#5e5e5e"/>
<rect x="2528" y="976" width="8" height="8" fill="#5e5e5e"/>
<rect x="2480" y="984" width="8" height="8" fill="#5e5e5e"/>
<rect x="2488" y="984" width="8" height="8" fill="#5e5e5e"/>
<rect x="2496" y="984" width="8" height="8" fill="#5e5e5e"/>
<rect x="2504" y="984" width="8" height="8" fill="#5e5e5e"/>
<rect x="2512" y="984" width="8" height="8" fill="#5e5e5e"/>
<rect x="2520" y="984" width="8" height="8" fill="#5e5e5e"/>
<rect x="2528" y="984" width="8" height="8" fill="#5e5e5e"/>
<rect x="2480" y="992" width="8" height="8" fill="#5e5e5e"/>
<rect x="2488" y="992" width="8" height="8" fill="#5e5e5e"/>
<rect x="2496" y="992" width="8" height="8" fill="#5e5e5e"/>
<rect x="2504" y="992" width="8" height="8" fill="#5e5e5e"/>
<rect x="2512" y="992" width="8" height="8" fill="#5e5e5e"/>
<rect x="2520" y="992" width="8" height="8" fill="#5e5e5e"/>
<rect x="2528" y="992" width="8" height="8" fill="#5e5e5e"/>
<rect x="2480" y="1000" width="8" height="8" fill="#5e5e5e"/>
<rect x="2488" y="1000" width="8" height="8" fill="#5e5e5e"/>
<rect x="2496" y="1000" width="8" height="8" fill="#5e5e5e"/>
<rect x="2504" y="1000" width="8" height="8" fill="#5e5e5e"/>
<rect x="2512" y="1000" width="8" height="8" fill="#5e5e5e"/>
<rect x="2520" y="1000" width="8" height="8" fill="#5e5e5e"/>
<rect x="2528" y="1000" width="8" height="8" fill="#5e5e5e"/>
<rect x="2480" y="1008" width="8" height="8" fill="#5e5e5e"/>
<rect x="2488" y="1008" width="8" height="8" fill="#5e5e5e"/>
<rect x="2496" y="1008" width="8" height="8" fill="#5e5e5e"/>
<rect x="2504" y="1008" width="8" height="8" fill="#5e5e5e"/>
<rect x="2512" y="1008" width="8" height="8" fill="#5e5e5e"/>
<rect x="2520" y="1008" width="8" height="8" fill="#5e5e5e"/>
<rect x="2528" y="1008" width="8" height="8" fill="#5e5e5e"/>
<rect x="2480" y="1016" width="8" height="8" fill="#5e5e5e"/>
<rect x="2488" y="1016" width="8" height="8" fill="#5e5e5e"/>
<rect x="2496" y="1016" width="8" height="8" fill="#5e5e5e"/>
<rect x="2504" y="1016" width="8" height="8" fill="#5e5e5e"/>
<rect x="2512" y="1016" width="8" height="8" fill="#5e5e5e"/>
<rect x="2520" y="1016" width="8" height="8" fill="#5e5e5e"/>
<rect x="2528" y="1016" width="8" height="8" fill="#5e5e5e"/>
<rect x="2480" y="1024" width="8" height="8" fill="#5e5e5e"/>
<rect x="2488" y="1024" width="8" height="8" fill="#5e5e5e"/>
<rect x="2496" y="1024" width="8" height="8" fill="#5e5e5e"/>
<rect x="2504" y="1024" width="8" height="8" fill="#5e5e5e"/>
<rect x="2512" y="1024" width="8" height="8" fill="#5e5e5e"/>
<rect x="2520" y="1024" width="8" height="8" fill="#5e5e5e"/>
<rect x="2528" y="1024" width="8" height="8" fill="#5e5e5e"/>
<rect x="2480" y="1032" width="8" height="8" fill="#5e5e5e"/>
<rect x="2488" y="1032" width="8" height="8" fill="#5e5e5e"/>
<rect x="2496" y="1032" width="8" height="8" fill="#5e5e5e"/>
<rect x="2504" y="1032" width="8" height="8" fill="#5e5e5e"/>
<rect x="2512" y="1032" width="8" height="8" fill="#5e5e5e"/>
<rect x="2520" y="1032" width="8" height="8" fill="#5e5e5e"/>
<rect x="2528" y="1032" width="8" height="8" fill="#5e5e5e"/>
<rect x="2480" y="1040" width="8" height="8" fill="#5e5e5e"/>
<rect x="2488" y="1040" width="8" height="8" fill="#5e5e5e"/>
<rect x="2496" y="1040" width="8" height="8" fill="#5e5e5e"/>
<rect x="2504" y="1040" width="8" height="8" fill="#5e5e5e"/>
<rect x="2512" y="1040" width="8" height="8" fill="#5e5e5e"/>
<rect x="2520" y="1040" width="8" height="8" fill="#5e5e5e"/>
<rect x="2528" y="1040" width="8" height="8" fill="#5e5e5e"/>
<rect x="2480" y="1048" width="8" height="8" fill="#5e5e5e"/>
<rect x="2488" y="1048" width="8" height="8" fill="#5e5e5e"/>
<rect x="2496" y="1048" width="8" height="8" fill="#5e5e5e"/>
<rect x="2504" y="1048" width="8" height="8" fill="#5e5e5e"/>
<rect x="2512" y="1048" width="8" height="8" fill="#5e5e5e"/>
<rect x="2520" y="1048" width="8" height="8" fill="#5e5e5e"/>
<rect x="2528" y="1048" width="8" height="8" fill="#5e5e5e"/>
<rect x="2480" y="1056" width="8" height="8" fill="#5e5e5e"/>
<rect x="2488" y="1056" width="8" height="8" fill="#5e5e5e"/>
<rect x="2496" y="1056" width="8" height="8" fill="#5e5e5e"/>
<rect x="2504" y="1056" width="8" height="8" fill="#5e5e5e"/>
<rect x="2512" y="1056" width="8" height="8" fill="#5e5e5e"/>
<rect x="2520" y="1056" width="8" height="8" fill="#5e5e5e"/>
<rect x="2528" y="1056" width="8" height="8" fill="#5e5e5e"/>
<rect x="2480" y="1064" width="8" height="8" fill="#5e5e5e"/>
<rect x="2488" y="1064" width="8" height="8" fill="#5e5e5e"/>
<rect x="2496" y="1064" width="8" height="8" fill="#5e5e5e"/>
<rect x="2504" y="1064" width="8" height="8" fill="#5e5e5e"/>
<rect x="2512" y="1064" width="8" height="8" fill="#5e5e5e"/>
<rect x="2520" y="1064" width="8" height="8" fill="#5e5e5e"/>
<rect x="2528" y="1064" width="8" height="8" fill="#5e5e5e"/>
<rect x="2480" y="1072" width="8" height="8" fill="#5e5e5e"/>
<rect x="2488" y="1072" width="8" height="8" fill="#5e5e5e"/>
<rect x="2496" y="1072" width="8" height="8" fill="#5e5e5e"/>
<rect x="2504" y="1072" width="8" height="8" fill="#5e5e5e"/>
<rect x="2512" y="1072" width="8" height="8" fill="#5e5e5e"/>
<rect x="2520" y="1072" width="8" height="8" fill="#5e5e5e"/>
<rect x="2528" y="1072" width="8" height="8" fill="#5e5e5e"/>
<rect x="2480" y="1080" width="8" height="8" fill="#5e5e5e"/>
<rect x="2488" y="1080" width="8" height="8" fill="#5e5e5e"/>
<rect x="2496" y="1080" width="8" height="8" fill="#5e5e5e"/>
<rect x="2504" y="1080" width="8" height="8" fill="#5e5e5e"/>
<rect x="2512" y="1080" width="8" height="8" fill="#5e5e5e"/>
<rect x="2520" y="1080" width="8" height="8" fill="#5e5e5e"/>
<rect x="2528" y="1080" width="8" height="8" fill="#5e5e5e"/>
<rect x="2480" y="1088" width="8" height="8" fill="#5e5e5e"/>
<rect x="2488" y="1088" width="8" height="8" fill="#5e5e5e"/>
<rect x="2496" y="1088" width="8" height="8" fill="#5e5e5e"/>
<rect x="2504" y="1088" width="8" height="8" fill="#5e5e5e"/>
<rect x="2512" y="1088" width="8" height="8" fill="#5e5e5e"/>
<rect x="2520" y="1088" width="8" height="8" fill="#5e5e5e"/>
<rect x="2528" y="1088" width="8" height="8" fill="#5e5e5e"/>
<rect x="2480" y="1096" width="8" height="8" fill="#5e5e5e"/>
<rect x="2488" y="1096" width="8" height="8" fill="#5e5e5e"/>
<rect x="2496" y="1096" width="8" height="8" fill="#5e5e5e"/>
<rect x="2504" y="1096" width="8" height="8" fill="#5e5e5e"/>
<rect x="2512" y="1096" width="8" height="8" fill="#5e5e5e"/>
<rect x="2520" y="1096" width="8" height="8" fill="#5e5e5e"/>
<rect x="2528" y="1096" width="8" height="8" fill="#5e5e5e"/>
<rect x="2480" y="1104" width="8" height="8" fill="#5e5e5e"/>
<rect x="2488" y="1104" width="8" height="8" fill="#5e5e5e"/>
<rect x="2496" y="1104" width="8" height="8" fill="#5e5e5e"/>
<rect x="2504" y="1104" width="8" height="8" fill="#5e5e5e"/>
<rect x="2512" y="1104" width="8" height="8" fill="#5e5e5e"/>
<rect x="2520" y="1104" width="8" height="8" fill="#5e5e5e"/>
<rect x="2528" y="1104" width="8" height="8" fill="#5e5e5e"/>
<rect x="2480" y="1112" width="8" height="8" fill="#5e5e5e"/>
<rect x="2488" y="1112" width="8" height="8" fill="#5e5e5e"/>
<rect x="2496" y="1112" width="8" height="8" fill="#5e5e5e"/>
<rect x="2504" y="1112" width="8" height="8" fill="#5e5e5e"/>
<rect x="2512" y="1112" width="8" height="8" fill="#5e5e5e"/>
<rect x="2520" y="1112" width="8" height="8" fill="#5e5e5e"/>
<rect x="2528" y="1112" width="8" height="8" fill="#5e5e5e"/>
<rect x="2480" y="1120" width="8" height="8" fill="#5e5e5e"/>
<rect x="2488" y="1120" width="8" height="8" fill="#5e5e5e"/>
<rect x="2496" y="1120" width="8" height="8" fill="#5e5e5e"/>
<rect x="2504" y="1120" width="8" height="8" fill="#5e5e5e"/>
<rect x="2512" y="1120" width="8" height="8" fill="#5e5e5e"/>
<rect x="2520" y="1120" width="8" height="8" fill="#5e5e5e"/>
<rect x="2528" y="1120" width="8" height="8" fill="#5e5e5e"/>
<rect x="2480" y="1128" width="8" height="8" fill="#5e5e5e"/>
<rect x="2488" y="1128" width="8" height="8" fill="#5e5e5e"/>
<rect x="2496" y="1128" width="8" height="8" fill="#5e5e5e"/>
<rect x="2504" y="1128" width="8" height="8" fill="#5e5e5e"/>
<rect x="2512" y="1128" width="8" height="8" fill="#5e5e5e"/>
<rect x="2520" y="1128" width="8" height="8" fill="#5e5e5e"/>
<rect x="2480" y="1136" width="8" height="8" fill="#5e5e5e"/>
<rect x="2488" y="1136" width="8" height="8" fill="#5e5e5e"/>
<rect x="2496" y="1136" width="8" height="8" fill="#5e5e5e"/>
<rect x="2504" y="1136" width="8" height="8" fill="#5e5e5e"/>
<rect x="2512" y="1136" width="8" height="8" fill="#5e5e5e"/>
<rect x="2480" y="1144" width="8" height="8" fill="#5e5e5e"/>
<rect x="2488" y="1144" width="8" height="8" fill="#5e5e5e"/>
<rect x="2496" y="1144" width="8" height="8" fill="#5e5e5e"/>
<rect x="2504" y="1144" width="8" height="8" fill="#5e5e5e"/>
<rect x="2512" y="1144" width="8" height="8" fill="#5e5e5e"/>
<rect x="2480" y="1152" width="8" height="8" fill="#5e5e5e"/>
<rect x="2488" y="1152" width="8" height="8" fill="#5e5e5e"/>
<rect x="2496" y="1152" width="8" height="8" fill="#5e5e5e"/>
<rect x="2504" y="1152" width="8" height="8" fill="#5e5e5e"/>
<rect x="2480" y="1160" width="8" height="8" fill="#5e5e5e"/>
<rect x="2488" y="1160" width="8" height="8" fill="#5e5e5e"/>
<rect x="2496" y="1160" width="8" height="8" fill="#5e5e5e"/>
<rect x="2480" y="1168" width="8" height="8" fill="#5e5e5e"/>
<rect x="2472" y="344" width="8" height="8" fill="#9a9a9a"/>
<path d="M2473,351 A122,409.5 0 0 1 2473,1170 Z" fill="#284cf6" />
<rect x="65" y="117" width="8" height="8" fill="#3b3e48" rx="1.6"/>
<rect x="65" y="129" width="8" height="8" fill="#3b3e48" rx="1.6"/>
<rect x="65" y="141" width="8" height="8" fill="#3b3e48" rx="1.6"/>
<rect x="77" y="117" width="8" height="8" fill="#3b3e48" rx="1.6"/>
<rect x="77" y="129" width="8" height="8" fill="#3b3e48" rx="1.6"/>
<rect x="77" y="141" width="8" height="8" fill="#3b3e48" rx="1.6"/>
<rect x="89" y="117" width="8" height="8" fill="#3b3e48" rx="1.6"/>
<rect x="89" y="129" width="8" height="8" fill="#3b3e48" rx="1.6"/>
<rect x="89" y="141" width="8" height="8" fill="#3b3e48" rx="1.6"/>
<defs><linearGradient id="lg" x1="0" y1="0" x2="0" y2="1"><stop offset="0" stop-color="#24a4ec"/><stop offset="1" stop-color="#2d4fe6"/></linearGradient><linearGradient id="fbg" x1="0" y1="0" x2="0" y2="1"><stop offset="0" stop-color="#1fa8ea"/><stop offset="1" stop-color="#3046ea"/></linearGradient><filter id="sh" x="-30%" y="-30%" width="160%" height="160%"><feDropShadow dx="0" dy="0.8" stdDeviation="2.4" flood-color="#000" flood-opacity="0.2"/></filter></defs>
<rect x="131" y="104" width="56" height="57" fill="url(#lg)" rx="13"/>
<linearGradient id="lgu" gradientUnits="userSpaceOnUse" x1="0" y1="104" x2="0" y2="161"><stop offset="0" stop-color="#24a4ec"/><stop offset="1" stop-color="#2d4fe6"/></linearGradient>
<path d="M139.15,124.45 A20.6,20.6 0 1 1 167.33,151.90 L161.32,140.83 A8.0,8.0 0 1 0 150.37,130.17 Z" fill="#fff" />
<circle cx="157.5" cy="133.8" r="7.2" fill="none" stroke="url(#lgu)" stroke-width="2.9"/>
<path d="M158.02,127.82 L159.50,110.89" fill="none" stroke="url(#lgu)" stroke-width="3.0" stroke-linecap="round" stroke-linejoin="round" stroke-linecap="butt"/>
<path d="M163.48,133.28 L180.41,131.80" fill="none" stroke="url(#lgu)" stroke-width="3.0" stroke-linecap="round" stroke-linejoin="round" stroke-linecap="butt"/>
<circle cx="157.5" cy="133.8" r="5.8" fill="#fff"/>
<text x="207.59" y="145.40" font-size="35.3" fill="#202228" textLength="78.10" lengthAdjust="spacingAndGlyphs" font-weight="bold">CRM</text>
<rect x="955" y="105" width="564" height="56" fill="#eff1f4" rx="6"/>
<circle cx="982.2" cy="131.8" r="8.2" fill="none" stroke="#9ea3ad" stroke-width="2.2"/>
<path d="M988.2,137.8 L993,142.6" fill="none" stroke="#9ea3ad" stroke-width="2.2" stroke-linecap="round" stroke-linejoin="round" />
<text x="1010.95" y="140.00" font-size="22" fill="#9ca1ac" textLength="406.88" lengthAdjust="spacingAndGlyphs" stroke="#9ca1ac" stroke-width="0.3">Search for potential, contact, customers</text>
<circle cx="1913" cy="133" r="21.2" fill="url(#fbg)"/>
<path d="M1910,145.4 V133.2 H1907.7 V130 H1910 V128 C1910,124.3 1912,121.9 1915.6,121.9 C1916.8,121.9 1917.6,122 1918.2,122.1 V125.6 H1917 C1915.9,125.6 1915.6,126.3 1915.6,127.4 V130 H1918.2 L1917.8,133.2 H1915.6 V145.4 Z" fill="#fff" />
<path d="M1990,116.5 L2004.5,124.5 V133.5 M1990,116.5 L1975.5,124.5 V141 L1990,149 M1975.5,124.5 L1990,132.5 L2004.5,124.5 M1990,132.5 V149" fill="none" stroke="#575c6b" stroke-width="2.3" stroke-linecap="round" stroke-linejoin="round" />
<circle cx="2000" cy="143.5" r="3.6" fill="none" stroke="#575c6b" stroke-width="2.3"/>
<path d="M2002.8,146.3 L2005.5,149" fill="none" stroke="#575c6b" stroke-width="2.3" stroke-linecap="round" stroke-linejoin="round" />
<rect x="2054.2" y="120.5" width="28.4" height="28.2" fill="none" rx="4.5" stroke="#575c6b" stroke-width="2.3"/>
<path d="M2054.2,131 H2082.6 M2061,116.6 V124 M2076,116.6 V124" fill="none" stroke="#575c6b" stroke-width="2.3" stroke-linecap="round" stroke-linejoin="round" />
<path d="M2131.2,141.8 H2160.2 C2158,139.8 2157,137 2157,133.5 V129.5 C2157,122.5 2152.2,117.2 2145.7,117.2 C2139.2,117.2 2134.4,122.5 2134.4,129.5 V133.5 C2134.4,137 2133.4,139.8 2131.2,141.8 Z" fill="none" stroke="#575c6b" stroke-width="2.3" stroke-linecap="round" stroke-linejoin="round" />
<path d="M2140.4,142.6 C2140.4,146 2142.6,148.3 2145.7,148.3 C2148.8,148.3 2151,146 2151,142.6" fill="none" stroke="#575c6b" stroke-width="2.3" stroke-linecap="round" stroke-linejoin="round" />
<circle cx="2161.2" cy="116.8" r="14.2" fill="#e8383b" stroke="#fff" stroke-width="2"/>
<text x="2155.83" y="122.10" font-size="19.6" fill="#fff" textLength="12.94" lengthAdjust="spacingAndGlyphs" stroke="#fff" stroke-width="0.65">2</text>
<g transform="translate(2223,132.6) scale(1.78) translate(-12,-12)"><path d="M10.325 4.317c.426 -1.756 2.924 -1.756 3.35 0a1.724 1.724 0 0 0 2.573 1.066c1.543 -.94 3.31 .826 2.37 2.37a1.724 1.724 0 0 0 1.065 2.572c1.756 .426 1.756 2.924 0 3.35a1.724 1.724 0 0 0 -1.066 2.573c.94 1.543 -.826 3.31 -2.37 2.37a1.724 1.724 0 0 0 -2.572 1.065c-.426 1.756 -2.924 1.756 -3.35 0a1.724 1.724 0 0 0 -2.573 -1.066c-1.543 .94 -3.31 -.826 -2.37 -2.37a1.724 1.724 0 0 0 -1.065 -2.572c-1.756 -.426 -1.756 -2.924 0 -3.35a1.724 1.724 0 0 0 1.066 -2.573c-.94 -1.543 .826 -3.31 2.37 -2.37c1 .608 2.296 .07 2.572 -1.065z" fill="none" stroke="#575c6b" stroke-width="1.28" stroke-linejoin="round"/><circle cx="12" cy="12" r="3" fill="none" stroke="#575c6b" stroke-width="1.28"/></g>
<circle cx="2300.7" cy="132.7" r="16" fill="none" stroke="#575c6b" stroke-width="2.3"/>
<path d="M2295.5,128.2 C2295.5,125 2297.8,122.8 2300.8,122.8 C2303.8,122.8 2306,125 2306,127.8 C2306,131.8 2300.8,132 2300.8,136.4" fill="none" stroke="#575c6b" stroke-width="2.3" stroke-linecap="round" stroke-linejoin="round" />
<circle cx="2300.8" cy="141.6" r="1.4" fill="#575c6b"/>
<clipPath id="avc"><circle cx="2385.6" cy="132.6" r="28.3"/></clipPath>
<g clip-path="url(#avc)">
<rect x="2356" y="103" width="60" height="60" fill="#e1e1e6"/>
<path d="M2387,107 C2377,107 2372,114 2371,125 L2370,146 L2404,146 L2403,125 C2402,114 2397,107 2387,107 Z" fill="#44362d" />
<path d="M2362,163 C2366,150 2374,144 2383,142.5 L2393,142.5 C2402,144 2409,150 2412,163 Z" fill="#d8cecb" />
<rect x="2383" y="128" width="10" height="16" fill="#d3b9a8"/>
<ellipse cx="2387.4" cy="124.6" rx="7.2" ry="10.4" fill="#dcc1b1"/>
<path d="M2386,106.8 C2377,107 2372,113 2370.5,124 C2369,136 2368,148 2364.5,157 C2367,160 2371,161.5 2375,161 C2377,152 2378.5,140 2379.5,130 C2380,122 2382,116 2388,113.5 Z" fill="#44362d" />
<path d="M2386,106.8 C2396,107 2401,113 2402.5,124 C2404,136 2405,146 2409.5,152 C2407,156 2403,159 2399,160 C2397.5,150 2396.5,140 2395.5,130 C2395,122 2393,116 2388,113.5 Z" fill="#3e3129" />
<path d="M2381,113 C2385,109.5 2392,110 2395.5,115 C2391,114.5 2386,116 2382,122 L2380,128 Z" fill="#3e3129" />
<path d="M2381.2,140 L2384.6,162" fill="none" stroke="#2a1f1c" stroke-width="1.8" stroke-linecap="round" stroke-linejoin="round" />
</g>
<path d="M61.2,199 C61.2,197.8 61.7,196.9 62.6,196.2 L72.6,188.3 C73.7,187.4 75.1,187.4 76.2,188.3 L86.1,196.2 C87,196.9 87.5,197.8 87.5,199 V210.2 C87.5,211.8 86.4,212.9 84.8,212.9 H80.6 C79.6,212.9 78.8,212.1 78.8,211.1 V208.4 C78.8,206.8 77.6,205.8 76,205.8 H72.8 C71.2,205.8 70,206.8 70,208.4 V211.1 C70,212.1 69.2,212.9 68.2,212.9 H64 C62.4,212.9 61.2,211.8 61.2,210.2 Z" fill="none" stroke="#222428" stroke-width="1.75" stroke-linecap="round" stroke-linejoin="round" />
<circle cx="74.4" cy="198" r="2.9" fill="none" stroke="#222428" stroke-width="1.75"/>
<text x="98.95" y="206.30" font-size="22" fill="#222428" textLength="91.99" lengthAdjust="spacingAndGlyphs" stroke="#222428" stroke-width="0.1">Overview</text>
<circle cx="278.2" cy="200.6" r="12.6" fill="none" stroke="#222428" stroke-width="1.75"/>
<path d="M278.2,188.6 V190.6 M278.2,210.6 V212.6 M266.2,200.6 H268.2 M288.2,200.6 H290.2" fill="none" stroke="#222428" stroke-width="1.75" stroke-linecap="round" stroke-linejoin="round" />
<circle cx="278.2" cy="197.2" r="2.3" fill="none" stroke="#222428" stroke-width="1.75"/>
<path d="M272.8,208.3 C272.8,204.8 275.2,202.4 278.2,202.4 C281.2,202.4 283.6,204.8 283.6,208.3" fill="none" stroke="#222428" stroke-width="1.75" stroke-linecap="round" stroke-linejoin="round" />
<text x="300.03" y="206.30" font-size="22" fill="#222428" textLength="93.58" lengthAdjust="spacingAndGlyphs" stroke="#222428" stroke-width="0.1">Potential</text>
<path d="M468.8,193.8 V203.5 C468.8,209.5 473.8,213 480.2,213 C486.6,213 491.6,209.5 491.6,203.5 V193.8 M468.8,193.8 V190.5 C468.8,188.2 470.3,186.6 472.3,186.6 C474.3,186.6 475.8,188.2 475.8,190.5 V201 C475.8,203.5 477.6,205.6 480.2,205.6 C482.8,205.6 484.6,203.5 484.6,201 V190.5 C484.6,188.2 486.1,186.6 488.1,186.6 C490.1,186.6 491.6,188.2 491.6,190.5 V193.8 M468.8,193.6 H475.8 M484.6,193.6 H491.6" fill="none" stroke="#222428" stroke-width="1.75" stroke-linecap="round" stroke-linejoin="round" />
<text x="503.88" y="206.30" font-size="22" fill="#222428" textLength="52.51" lengthAdjust="spacingAndGlyphs" stroke="#222428" stroke-width="0.1">Offer</text>
<rect x="674.6" y="186.4" width="22" height="26.8" fill="none" rx="3.6" stroke="#222428" stroke-width="1.75"/>
<path d="M672.5,195.5 H677 M672.5,204.3 H677" fill="none" stroke="#222428" stroke-width="1.75" stroke-linecap="round" stroke-linejoin="round" />
<circle cx="685.5" cy="195.5" r="2.1" fill="none" stroke="#222428" stroke-width="1.75"/>
<path d="M680.4,206.5 C680.4,203 682.6,200.5 685.7,200.5 C688.8,200.5 691,203 691,206.5" fill="none" stroke="#222428" stroke-width="1.75" stroke-linecap="round" stroke-linejoin="round" />
<text x="712.32" y="206.30" font-size="22" fill="#222428" textLength="79.85" lengthAdjust="spacingAndGlyphs" stroke="#222428" stroke-width="0.1">Contact</text>
<path d="M846,213.5 H873.3 M846.3,213.5 V195.2 C846.3,194.1 847.1,193.3 848.2,193.3 H856.5 M856.5,213.5 V188.2 C856.5,187.1 857.3,186.3 858.4,186.3 H871.2 C872.3,186.3 873,187.1 873,188.2 V213.5" fill="none" stroke="#5a5e6c" stroke-width="1.75" stroke-linecap="round" stroke-linejoin="round" />
<path d="M861.5,192 H867.4 M861.5,197.2 H867.4 M861.5,202.4 H867.4" fill="none" stroke="#5a5e6c" stroke-width="1.75" stroke-linecap="round" stroke-linejoin="round" />
<path d="M849.4,199 H849.9 M853,199 H853.5 M849.4,204.2 H849.9 M853,204.2 H853.5" fill="none" stroke="#5a5e6c" stroke-width="1.9" stroke-linecap="round" stroke-linejoin="round" />
<path d="M850,213 V210.3 C850,209.2 850.7,208.6 851.6,208.6 C852.5,208.6 853.1,209.2 853.1,210.3 V213 M862.2,213 V209.3 C862.2,208 863,207.5 864.4,207.5 C865.8,207.5 866.6,208 866.6,209.3 V213" fill="none" stroke="#5a5e6c" stroke-width="1.75" stroke-linecap="round" stroke-linejoin="round" />
<text x="883.33" y="206.30" font-size="22" fill="#5a5e6c" textLength="100.06" lengthAdjust="spacingAndGlyphs" stroke="#5a5e6c" stroke-width="0.1">Customer</text>
<rect x="1022.4" y="195.6" width="26.8" height="17.3" fill="none" rx="3.6" stroke="#222428" stroke-width="1.75"/>
<path d="M1027.4,195.4 L1037.4,188 C1038.3,187.3 1039.5,187.5 1040.2,188.3 L1043.8,193.3 M1034.2,195.3 L1042.3,191.1 C1043.3,190.6 1044.4,191 1044.8,192 L1045.6,195.3" fill="none" stroke="#222428" stroke-width="1.75" stroke-linecap="round" stroke-linejoin="round" />
<path d="M1049.2,198.7 H1045.5 C1043.2,198.7 1041.5,200.4 1041.5,202.6 C1041.5,204.8 1043.2,206.5 1045.5,206.5 H1049.2" fill="none" stroke="#222428" stroke-width="1.75" stroke-linecap="round" stroke-linejoin="round" />
<text x="1059.90" y="206.30" font-size="22" fill="#222428" textLength="120.15" lengthAdjust="spacingAndGlyphs" stroke="#222428" stroke-width="0.1">Opportunity</text>
<path d="M1218,186.6 H1220.2 C1221.3,186.6 1222,187.3 1222.2,188.4 L1225,205.2 C1225.3,206.8 1226.5,207.6 1228,207.6 H1242 C1243.4,207.6 1244.5,206.6 1244.8,205.2 L1246.5,197 C1246.7,196 1246,195.3 1245,195.3 H1223.8" fill="none" stroke="#4058d8" stroke-width="1.75" stroke-linecap="round" stroke-linejoin="round" />
<circle cx="1229.8" cy="210.9" r="2.7" fill="none" stroke="#4058d8" stroke-width="1.75"/>
<circle cx="1238.8" cy="210.9" r="2.7" fill="none" stroke="#4058d8" stroke-width="1.75"/>
<text x="1255.94" y="206.30" font-size="22" fill="#4058d8" textLength="57.44" lengthAdjust="spacingAndGlyphs" stroke="#4058d8" stroke-width="0.5">Order</text>
<rect x="1413.8" y="186.4" width="21" height="26.8" fill="none" rx="3.6" stroke="#222428" stroke-width="1.75"/>
<path d="M1427.2,194.5 C1426.6,193.2 1425.7,192.6 1424.2,192.6 C1422.4,192.6 1421.2,193.6 1421.2,195.2 C1421.2,198.8 1427.9,197.4 1427.9,201.2 C1427.9,202.9 1426.5,204 1424.4,204 C1422.8,204 1421.7,203.3 1421,202 M1424.3,191.3 V192.6 M1424.3,204 V205.4 M1421.5,209.6 H1427.3" fill="none" stroke="#222428" stroke-width="1.75" stroke-linecap="round" stroke-linejoin="round" />
<text x="1447.89" y="206.30" font-size="22" fill="#222428" textLength="101.63" lengthAdjust="spacingAndGlyphs" stroke="#222428" stroke-width="0.1">Quotation</text>
<path d="M1585.2,213 V189.2 C1585.2,187.6 1586.3,186.5 1587.9,186.5 H1604.3 C1605.9,186.5 1607,187.6 1607,189.2 V213 L1604.3,211 L1601.5,213 L1598.8,211 L1596.1,213 L1593.4,211 L1590.7,213 L1588,211 Z" fill="none" stroke="#222428" stroke-width="1.75" stroke-linecap="round" stroke-linejoin="round" />
<path d="M1590,192.5 H1602 M1590,197.6 H1602 M1594.5,202.7 H1602" fill="none" stroke="#222428" stroke-width="1.75" stroke-linecap="round" stroke-linejoin="round" />
<text x="1617.81" y="206.30" font-size="22" fill="#222428" textLength="75.25" lengthAdjust="spacingAndGlyphs" stroke="#222428" stroke-width="0.1">Invoice</text>
<path d="M1777.5,187.5 C1769.2,188.1 1763.6,194.5 1763.6,201.4 C1763.6,208.9 1769.7,213.2 1776.2,213.2 C1783.1,213.2 1789.2,208.9 1790.4,202 C1790.6,200.9 1790,200.2 1788.9,200.2 H1779.5 C1778.5,200.2 1777.8,199.4 1777.8,198.4 V189.1 C1777.8,188.3 1777.5,187.5 1777.5,187.5 Z" fill="none" stroke="#222428" stroke-width="1.75" stroke-linecap="round" stroke-linejoin="round" />
<path d="M1781.2,187.6 V195.5 C1781.2,196.5 1781.9,197.2 1782.9,197.2 H1790.8 C1790,192.1 1786.3,188.4 1781.2,187.6 Z" fill="none" stroke="#222428" stroke-width="1.75" stroke-linecap="round" stroke-linejoin="round" />
<text x="1800.12" y="206.30" font-size="22" fill="#222428" textLength="68.64" lengthAdjust="spacingAndGlyphs" stroke="#222428" stroke-width="0.1">Report</text>
<path d="M1949.2,195.8 C1953,195.6 1957,194.6 1962.4,191.7 C1963.3,191.3 1964.8,191.5 1964.8,192.9 V207.2 C1964.8,208.6 1963.3,208.8 1962.4,208.4 C1957,205.5 1953,204.5 1949.2,204.3 Z" fill="none" stroke="#222428" stroke-width="1.75" stroke-linecap="round" stroke-linejoin="round" />
<path d="M1949.2,195.8 H1946.7 C1944.1,195.8 1942.4,197.8 1942.4,200 C1942.4,202.3 1944.1,204.3 1946.7,204.3 H1949.2 M1945.4,204.4 V210 C1945.4,211 1946.1,211.6 1947,211.6 H1949.2 V204.4 M1964.8,197.6 C1966.8,197.6 1968,198.7 1968,200 C1968,201.4 1966.8,202.5 1964.8,202.5" fill="none" stroke="#222428" stroke-width="1.75" stroke-linecap="round" stroke-linejoin="round" />
<text x="1979.43" y="206.30" font-size="22" fill="#222428" textLength="105.07" lengthAdjust="spacingAndGlyphs" stroke="#222428" stroke-width="0.1">Campaign</text>
<path d="M2146.2,191 H2170 M2146.2,200 H2170 M2146.2,209 H2170" fill="none" stroke="#222428" stroke-width="1.75" stroke-linecap="round" stroke-linejoin="round" />
<text x="2181.93" y="206.30" font-size="22" fill="#222428" textLength="56.44" lengthAdjust="spacingAndGlyphs" stroke="#222428" stroke-width="0.1">Other</text>
<rect x="32" y="235" width="2410" height="113" fill="#e3e4e8"/>
<rect x="32" y="235" width="2410" height="2" fill="#cbcdd1"/>
<rect x="32" y="237" width="2410" height="2" fill="#dadbdf"/>
<rect x="1221" y="233" width="136" height="3.8" fill="#3d5ce0" rx="1.9"/>
<rect x="32" y="346.6" width="2410" height="1.2" fill="#d6d7dc"/>
<text x="60.93" y="300.50" font-size="35.2" fill="#1f2128" textLength="150.86" lengthAdjust="spacingAndGlyphs" stroke="#1f2128" stroke-width="1.0">All orders</text>
<path d="M332,287 L339.6,294.6 L347.2,287" fill="none" stroke="#4a4e5a" stroke-width="2" stroke-linecap="round" stroke-linejoin="round" />
<path d="M402.1,299.6 A11.8,11.8 0 1 1 405.4,291.2" fill="none" stroke="#5a5e6a" stroke-width="2" stroke-linecap="round" stroke-linejoin="round" />
<path d="M399.6,288.4 L405.3,292.5 L409,287.2" fill="none" stroke="#5a5e6a" stroke-width="2" stroke-linecap="round" stroke-linejoin="round" />
<rect x="1512" y="265" width="420" height="53.6" fill="#fff" rx="6" stroke="#d7d9de" stroke-width="1.4"/>
<circle cx="1537.6" cy="289.8" r="7.6" fill="none" stroke="#8f94a0" stroke-width="2.1"/>
<path d="M1543.2,295.4 L1548.4,300.6" fill="none" stroke="#8f94a0" stroke-width="2.1" stroke-linecap="round" stroke-linejoin="round" />
<text x="1565.96" y="299.30" font-size="22.8" fill="#9ca1ac" textLength="72.53" lengthAdjust="spacingAndGlyphs" stroke="#9ca1ac" stroke-width="0.3">Search</text>
<rect x="1948.1" y="262.8" width="197.6" height="56.9" fill="#4361ee" rx="6"/>
<rect x="2089.6" y="262.8" width="1.2" height="56.9" fill="#3350d6"/>
<path d="M1977.1,281.2 V303.8 M1965.8,292.5 H1988.5" fill="none" stroke="#fff" stroke-width="1.9" stroke-linecap="round" stroke-linejoin="round" />
<text x="2004.85" y="298.90" font-size="23.5" fill="#fff" textLength="41.03" lengthAdjust="spacingAndGlyphs" stroke="#fff" stroke-width="0.7">Add</text>
<path d="M2110.4,288.2 L2118.1,295.9 L2125.8,288.2" fill="none" stroke="#fff" stroke-width="1.9" stroke-linecap="round" stroke-linejoin="round" />
<rect x="2161.5" y="265" width="60" height="53" fill="#fff" rx="6" stroke="#d9dbe0" stroke-width="1.1"/>
<path d="M2191.2,282.3 A11,11 0 1 0 2202.2,293.3 H2191.2 Z" fill="none" stroke="#4d5260" stroke-width="1.9" stroke-linecap="round" stroke-linejoin="round" />
<path d="M2194.2,290.3 V280.5 A9.8,9.8 0 0 1 2204,290.3 Z" fill="none" stroke="#4d5260" stroke-width="1.9" stroke-linecap="round" stroke-linejoin="round" />
<rect x="2239.2" y="265" width="60" height="53" fill="#fff" rx="6" stroke="#d9dbe0" stroke-width="1.1"/>
<circle cx="2260.7" cy="291.5" r="2.4" fill="#4d5260"/>
<circle cx="2268.9" cy="291.5" r="2.4" fill="#4d5260"/>
<circle cx="2277.2" cy="291.5" r="2.4" fill="#4d5260"/>
<rect x="2317.2" y="265" width="94.6" height="53" fill="#fff" rx="6" stroke="#d9dbe0" stroke-width="1.1"/>
<circle cx="2333.3" cy="283.7" r="1.35" fill="#4d5260"/>
<path d="M2338.4,283.7 H2353.6" fill="none" stroke="#4d5260" stroke-width="1.8" stroke-linecap="round" stroke-linejoin="round" />
<circle cx="2333.3" cy="292.45" r="1.35" fill="#4d5260"/>
<path d="M2338.4,292.45 H2353.6" fill="none" stroke="#4d5260" stroke-width="1.8" stroke-linecap="round" stroke-linejoin="round" />
<circle cx="2333.3" cy="301.2" r="1.35" fill="#4d5260"/>
<path d="M2338.4,301.2 H2353.6" fill="none" stroke="#4d5260" stroke-width="1.8" stroke-linecap="round" stroke-linejoin="round" />
<path d="M2379.2,288.2 L2385.6,294.6 L2392,288.2" fill="none" stroke="#4d5260" stroke-width="1.9" stroke-linecap="round" stroke-linejoin="round" />
<text x="105.04" y="390.50" font-size="22.6" fill="#3d5ce0" textLength="53.16" lengthAdjust="spacingAndGlyphs" stroke="#3d5ce0" stroke-width="0.65">Filter</text>
<text x="301.92" y="390.50" font-size="22.6" fill="#5f6472" textLength="95.55" lengthAdjust="spacingAndGlyphs" stroke="#5f6472" stroke-width="0.3">Statistics</text>
<rect x="244" y="417" width="210" height="1.6" fill="#d5d7dc"/>
<rect x="32" y="415" width="212" height="4" fill="#3d5ce0" rx="2"/>
<text x="59.77" y="475.50" font-size="22.2" fill="#4d5260" textLength="146.09" lengthAdjust="spacingAndGlyphs" stroke="#4d5260" stroke-width="0.3">SAVED FILTER</text>
<path d="M406.5,465 L414,472.6 L421.5,465" fill="none" stroke="#4d5260" stroke-width="2" stroke-linecap="round" stroke-linejoin="round" />
<text x="73.47" y="539.20" font-size="22.6" fill="#3d5ce0" textLength="116.28" lengthAdjust="spacingAndGlyphs" stroke="#3d5ce0" stroke-width="0.65">In Cau Giay</text>
<text x="59.04" y="614.40" font-size="22.2" fill="#4d5260" textLength="161.89" lengthAdjust="spacingAndGlyphs" stroke="#4d5260" stroke-width="0.3">FILTER ORDERS</text>
<rect x="61" y="645.2" width="365.6" height="55" fill="#fff" rx="6" stroke="#d0d3d9" stroke-width="1.6"/>
<circle cx="87.5" cy="669.8" r="8" fill="none" stroke="#8f94a0" stroke-width="2.2"/>
<path d="M93.3,675.7 L98.2,680.6" fill="none" stroke="#8f94a0" stroke-width="2.2" stroke-linecap="round" stroke-linejoin="round" />
<text x="116.26" y="679.60" font-size="22.4" fill="#9ca1ac" textLength="121.02" lengthAdjust="spacingAndGlyphs" stroke="#9ca1ac" stroke-width="0.3">Search field</text>
<rect x="61.2" y="730.8" width="26" height="26" fill="#fff" rx="3" stroke="#b9bdc6" stroke-width="1.6"/>
<text x="102.46" y="750.50" font-size="22.6" fill="#25272d" textLength="162.43" lengthAdjust="spacingAndGlyphs" stroke="#25272d" stroke-width="0.3">Status recorded</text>
<rect x="61.2" y="787.3" width="26" height="26" fill="#fff" rx="3" stroke="#b9bdc6" stroke-width="1.6"/>
<text x="102.44" y="807.00" font-size="22.6" fill="#25272d" textLength="139.94" lengthAdjust="spacingAndGlyphs" stroke="#25272d" stroke-width="0.3">Order number</text>
<rect x="61.2" y="843.8" width="26" height="26" fill="#fff" rx="3" stroke="#b9bdc6" stroke-width="1.6"/>
<text x="101.60" y="863.50" font-size="22.6" fill="#25272d" textLength="121.21" lengthAdjust="spacingAndGlyphs" stroke="#25272d" stroke-width="0.3">Explanation</text>
<rect x="61.2" y="900.3" width="26" height="26" fill="#fff" rx="3" stroke="#b9bdc6" stroke-width="1.6"/>
<text x="102.45" y="920.00" font-size="22.6" fill="#25272d" textLength="116.24" lengthAdjust="spacingAndGlyphs" stroke="#25272d" stroke-width="0.3">Order value</text>
<rect x="61.2" y="956.8" width="26" height="26" fill="#fff" rx="3" stroke="#b9bdc6" stroke-width="1.6"/>
<text x="101.64" y="976.50" font-size="22.6" fill="#25272d" textLength="157.58" lengthAdjust="spacingAndGlyphs" stroke="#25272d" stroke-width="0.3">Recorded sales</text>
<rect x="61.2" y="1013.3" width="26" height="26" fill="#fff" rx="3" stroke="#b9bdc6" stroke-width="1.6"/>
<text x="102.44" y="1033.00" font-size="22.6" fill="#25272d" textLength="107.36" lengthAdjust="spacingAndGlyphs" stroke="#25272d" stroke-width="0.3">Order date</text>
<rect x="61.2" y="1069.8" width="26" height="26" fill="#fff" rx="3" stroke="#b9bdc6" stroke-width="1.6"/>
<text x="101.62" y="1089.50" font-size="22.6" fill="#25272d" textLength="144.85" lengthAdjust="spacingAndGlyphs" stroke="#25272d" stroke-width="0.3">Date recorded</text>
<rect x="60" y="1138.4" width="117.4" height="1.4" fill="#d5d7dc"/>
<rect x="310.8" y="1138.4" width="116" height="1.4" fill="#d5d7dc"/>
<text x="191.98" y="1145.60" font-size="22.6" fill="#3d5ce0" textLength="97.01" lengthAdjust="spacingAndGlyphs" stroke="#3d5ce0" stroke-width="0.3">See more</text>
<rect x="455" y="348" width="1423" height="70" fill="#eff1f3"/>
<rect x="455" y="416.8" width="1423" height="1.6" fill="#d9dbe0"/>
<rect x="486.2" y="372.0" width="23" height="23" fill="#fff" rx="3" stroke="#9aa0ab" stroke-width="1.6"/>
<text x="538.93" y="391.00" font-size="22.8" fill="#25272d" textLength="179.02" lengthAdjust="spacingAndGlyphs" stroke="#25272d" stroke-width="0.65">Record status DS</text>
<text x="744.22" y="391.00" font-size="22.8" fill="#25272d" textLength="142.06" lengthAdjust="spacingAndGlyphs" stroke="#25272d" stroke-width="0.65">Order number</text>
<text x="952.07" y="391.00" font-size="22.8" fill="#25272d" textLength="117.45" lengthAdjust="spacingAndGlyphs" stroke="#25272d" stroke-width="0.65">Description</text>
<text x="1551.23" y="391.00" font-size="22.8" fill="#25272d" textLength="117.97" lengthAdjust="spacingAndGlyphs" stroke="#25272d" stroke-width="0.65">Order value</text>
<circle cx="1828" cy="383.5" r="21" fill="#fff" filter="url(#sh)"/>
<path d="M1827.7,394.8 H1817.6 C1816.2,394.8 1815,393.6 1815,392.2 V372.6 C1815,371.2 1816.2,370 1817.6,370 H1836.8 C1838.2,370 1839.4,371.2 1839.4,372.6 V382.7 M1815,377 H1839.4 M1821.8,370 V394.8 M1836,385.5 V397.3 M1830.3,391.4 H1841.6" fill="none" stroke="#4d5260" stroke-width="1.7" stroke-linecap="round" stroke-linejoin="round" />
<rect x="455" y="487.46" width="1423" height="1.5" fill="#d8dade"/>
<rect x="486.2" y="442.59999999999997" width="23" height="23" fill="#fff" rx="3" stroke="#9aa0ab" stroke-width="1.6"/>
<text x="539.60" y="460.70" font-size="22.8" fill="#25272d" textLength="50.27" lengthAdjust="spacingAndGlyphs" stroke="#25272d" stroke-width="0.3">Draft</text>
<text x="743.42" y="460.70" font-size="22.8" fill="#1f3bb3" textLength="97.00" lengthAdjust="spacingAndGlyphs" stroke="#1f3bb3" stroke-width="0.3">DH00001</text>
<text x="952.13" y="460.70" font-size="22.8" fill="#1f3bb3" textLength="434.16" lengthAdjust="spacingAndGlyphs" stroke="#1f3bb3" stroke-width="0.3">New sales order for Friendly Company Ltd.</text>
<text x="1712.28" y="460.70" font-size="22.8" fill="#25272d" textLength="100.61" lengthAdjust="spacingAndGlyphs" text-anchor="end" stroke="#25272d" stroke-width="0.3">1,250,000</text>
<rect x="455" y="488.96" width="1423" height="70.56" fill="#e7e9fb"/>
<rect x="455" y="558.02" width="1423" height="1.5" fill="#d8dade"/>
<rect x="486.2" y="513.16" width="23" height="23" fill="#fff" rx="3" stroke="#9aa0ab" stroke-width="1.6"/>
<text x="539.64" y="531.26" font-size="22.8" fill="#3d5ce0" textLength="180.32" lengthAdjust="spacingAndGlyphs" stroke="#3d5ce0" stroke-width="0.3">Request to record</text>
<text x="743.42" y="531.26" font-size="22.8" fill="#1f3bb3" textLength="97.04" lengthAdjust="spacingAndGlyphs" stroke="#1f3bb3" stroke-width="0.3">DH00002</text>
<text x="952.13" y="531.26" font-size="22.8" fill="#1f3bb3" textLength="514.11" lengthAdjust="spacingAndGlyphs" stroke="#1f3bb3" stroke-width="0.3">New sales order for Hoa Sen Joint Stock Company</text>
<text x="1712.28" y="531.26" font-size="22.8" fill="#25272d" textLength="99.77" lengthAdjust="spacingAndGlyphs" text-anchor="end" stroke="#25272d" stroke-width="0.3">5,761,000</text>
<rect x="455" y="628.5799999999999" width="1423" height="1.5" fill="#d8dade"/>
<rect x="486.2" y="583.7199999999999" width="23" height="23" fill="#fff" rx="3" stroke="#9aa0ab" stroke-width="1.6"/>
<text x="539.60" y="601.82" font-size="22.8" fill="#2e8b68" textLength="100.39" lengthAdjust="spacingAndGlyphs" stroke="#2e8b68" stroke-width="0.3">Recorded</text>
<text x="743.42" y="597.22" font-size="22.8" fill="#1f3bb3" textLength="96.89" lengthAdjust="spacingAndGlyphs" stroke="#1f3bb3" stroke-width="0.3">DH00003</text>
<text x="952.12" y="601.82" font-size="22.8" fill="#1f3bb3" textLength="499.89" lengthAdjust="spacingAndGlyphs" stroke="#1f3bb3" stroke-width="0.3">New sales order for Minh Long Private Enterprise</text>
<text x="1712.28" y="601.82" font-size="22.8" fill="#25272d" textLength="100.01" lengthAdjust="spacingAndGlyphs" text-anchor="end" stroke="#25272d" stroke-width="0.3">2,250,000</text>
<rect x="455" y="699.1399999999999" width="1423" height="1.5" fill="#d8dade"/>
<rect x="486.2" y="654.2799999999999" width="23" height="23" fill="#fff" rx="3" stroke="#9aa0ab" stroke-width="1.6"/>
<text x="539.60" y="672.38" font-size="22.8" fill="#d62d2d" textLength="175.40" lengthAdjust="spacingAndGlyphs" stroke="#d62d2d" stroke-width="0.3">Decline to record</text>
<text x="743.43" y="667.78" font-size="22.8" fill="#1f3bb3" textLength="96.54" lengthAdjust="spacingAndGlyphs" stroke="#1f3bb3" stroke-width="0.3">DH00004</text>
<text x="952.13" y="672.38" font-size="22.8" fill="#1f3bb3" textLength="434.16" lengthAdjust="spacingAndGlyphs" stroke="#1f3bb3" stroke-width="0.3">New sales order for Friendly Company Ltd.</text>
<text x="1712.27" y="672.38" font-size="22.8" fill="#25272d" textLength="99.39" lengthAdjust="spacingAndGlyphs" text-anchor="end" stroke="#25272d" stroke-width="0.3">4,800,000</text>
<rect x="455" y="769.7" width="1423" height="1.5" fill="#d8dade"/>
<rect x="486.2" y="724.8399999999999" width="23" height="23" fill="#fff" rx="3" stroke="#9aa0ab" stroke-width="1.6"/>
<text x="539.60" y="742.94" font-size="22.8" fill="#25272d" textLength="50.27" lengthAdjust="spacingAndGlyphs" stroke="#25272d" stroke-width="0.3">Draft</text>
<text x="743.42" y="742.94" font-size="22.8" fill="#1f3bb3" textLength="96.84" lengthAdjust="spacingAndGlyphs" stroke="#1f3bb3" stroke-width="0.3">DH00005</text>
<text x="952.13" y="742.94" font-size="22.8" fill="#1f3bb3" textLength="434.16" lengthAdjust="spacingAndGlyphs" stroke="#1f3bb3" stroke-width="0.3">New sales order for Friendly Company Ltd.</text>
<text x="1712.28" y="742.94" font-size="22.8" fill="#25272d" textLength="100.61" lengthAdjust="spacingAndGlyphs" text-anchor="end" stroke="#25272d" stroke-width="0.3">1,250,000</text>
<rect x="455" y="840.26" width="1423" height="1.5" fill="#d8dade"/>
<rect x="486.2" y="795.4" width="23" height="23" fill="#fff" rx="3" stroke="#9aa0ab" stroke-width="1.6"/>
<text x="539.64" y="813.50" font-size="22.8" fill="#3d5ce0" textLength="180.32" lengthAdjust="spacingAndGlyphs" stroke="#3d5ce0" stroke-width="0.3">Request to record</text>
<text x="743.42" y="813.50" font-size="22.8" fill="#1f3bb3" textLength="96.89" lengthAdjust="spacingAndGlyphs" stroke="#1f3bb3" stroke-width="0.3">DH00006</text>
<text x="952.13" y="813.50" font-size="22.8" fill="#1f3bb3" textLength="514.11" lengthAdjust="spacingAndGlyphs" stroke="#1f3bb3" stroke-width="0.3">New sales order for Hoa Sen Joint Stock Company</text>
<text x="1712.28" y="813.50" font-size="22.8" fill="#25272d" textLength="99.77" lengthAdjust="spacingAndGlyphs" text-anchor="end" stroke="#25272d" stroke-width="0.3">5,000,000</text>
<rect x="455" y="910.8199999999999" width="1423" height="1.5" fill="#d8dade"/>
<rect x="486.2" y="865.9599999999999" width="23" height="23" fill="#fff" rx="3" stroke="#9aa0ab" stroke-width="1.6"/>
<text x="539.60" y="884.06" font-size="22.8" fill="#2e8b68" textLength="100.39" lengthAdjust="spacingAndGlyphs" stroke="#2e8b68" stroke-width="0.3">Recorded</text>
<text x="743.42" y="879.46" font-size="22.8" fill="#1f3bb3" textLength="97.04" lengthAdjust="spacingAndGlyphs" stroke="#1f3bb3" stroke-width="0.3">DH00007</text>
<text x="952.12" y="884.06" font-size="22.8" fill="#1f3bb3" textLength="499.89" lengthAdjust="spacingAndGlyphs" stroke="#1f3bb3" stroke-width="0.3">New sales order for Minh Long Private Enterprise</text>
<text x="1712.28" y="884.06" font-size="22.8" fill="#25272d" textLength="100.01" lengthAdjust="spacingAndGlyphs" text-anchor="end" stroke="#25272d" stroke-width="0.3">2,250,000</text>
<rect x="455" y="981.3799999999999" width="1423" height="1.5" fill="#d8dade"/>
<rect x="486.2" y="936.5199999999999" width="23" height="23" fill="#fff" rx="3" stroke="#9aa0ab" stroke-width="1.6"/>
<text x="539.60" y="954.62" font-size="22.8" fill="#d62d2d" textLength="175.40" lengthAdjust="spacingAndGlyphs" stroke="#d62d2d" stroke-width="0.3">Decline to record</text>
<text x="743.42" y="950.02" font-size="22.8" fill="#1f3bb3" textLength="96.88" lengthAdjust="spacingAndGlyphs" stroke="#1f3bb3" stroke-width="0.3">DH00008</text>
<text x="952.13" y="954.62" font-size="22.8" fill="#1f3bb3" textLength="434.16" lengthAdjust="spacingAndGlyphs" stroke="#1f3bb3" stroke-width="0.3">New sales order for Friendly Company Ltd.</text>
<text x="1712.27" y="954.62" font-size="22.8" fill="#25272d" textLength="99.39" lengthAdjust="spacingAndGlyphs" text-anchor="end" stroke="#25272d" stroke-width="0.3">4,800,000</text>
<rect x="455" y="1051.94" width="1423" height="1.5" fill="#d8dade"/>
<rect x="486.2" y="1007.0799999999999" width="23" height="23" fill="#fff" rx="3" stroke="#9aa0ab" stroke-width="1.6"/>
<text x="539.60" y="1025.18" font-size="22.8" fill="#25272d" textLength="50.27" lengthAdjust="spacingAndGlyphs" stroke="#25272d" stroke-width="0.3">Draft</text>
<text x="743.42" y="1025.18" font-size="22.8" fill="#1f3bb3" textLength="96.97" lengthAdjust="spacingAndGlyphs" stroke="#1f3bb3" stroke-width="0.3">DH00009</text>
<text x="952.13" y="1025.18" font-size="22.8" fill="#1f3bb3" textLength="434.16" lengthAdjust="spacingAndGlyphs" stroke="#1f3bb3" stroke-width="0.3">New sales order for Friendly Company Ltd.</text>
<text x="1712.28" y="1025.18" font-size="22.8" fill="#25272d" textLength="100.61" lengthAdjust="spacingAndGlyphs" text-anchor="end" stroke="#25272d" stroke-width="0.3">1,250,000</text>
<rect x="453.8" y="348" width="1.3" height="1094" fill="#d6d7dc"/>
<rect x="1877.8" y="348" width="1.3" height="1094" fill="#d6d7dc"/>
<circle cx="454.8" cy="894.8" r="21.4" fill="#fff" filter="url(#sh)"/>
<path d="M458.4,888.4 L451,895.8 L458.4,903.2" fill="none" stroke="#4a4d55" stroke-width="1.8" stroke-linecap="round" stroke-linejoin="round" />
<circle cx="1878.7" cy="894.9" r="21.4" fill="#fff" filter="url(#sh)"/>
<path d="M1876.3,887.2 L1883.6,894.3 L1876.3,901.3" fill="none" stroke="#4a4d55" stroke-width="1.8" stroke-linecap="round" stroke-linejoin="round" />
<rect x="455" y="1343.2" width="1987" height="1.4" fill="#d9dbe0"/>
<path d="M494.5,1387.2 H518.8 M494.5,1397.6 H518.8" fill="none" stroke="#4a4e5a" stroke-width="1.8" stroke-linecap="round" stroke-linejoin="round" />
<circle cx="511.6" cy="1387.2" r="3.6" fill="#fff" stroke="#4a4e5a" stroke-width="1.8"/>
<circle cx="501.8" cy="1397.6" r="3.6" fill="#fff" stroke="#4a4e5a" stroke-width="1.8"/>
<text x="555.79" y="1399.50" font-size="22.8" fill="#5a5f6e" textLength="87.56" lengthAdjust="spacingAndGlyphs" stroke="#5a5f6e" stroke-width="0.3">Tổng số:</text>
<text x="649.38" y="1399.50" font-size="22.8" fill="#1f2128" textLength="13.20" lengthAdjust="spacingAndGlyphs" font-weight="bold">9</text>
<rect x="1455.4" y="1365.6" width="108.4" height="54.2" fill="#fff" rx="6" stroke="#d5d7dc" stroke-width="1.6"/>
<text x="1481.47" y="1400.00" font-size="22.8" fill="#25272d" textLength="26.77" lengthAdjust="spacingAndGlyphs" stroke="#25272d" stroke-width="0.3">10</text>
<path d="M1531.3,1389.6 L1536.8,1395.2 L1542.3,1389.6" fill="none" stroke="#3d4250" stroke-width="1.8" stroke-linecap="round" stroke-linejoin="round" />
<path d="M1599,1382.5 V1404.5 M1614.5,1382.5 L1603.6,1393.5 L1614.5,1404.5" fill="none" stroke="#c3c6cd" stroke-width="1.8" stroke-linecap="round" stroke-linejoin="round" />
<path d="M1656.6,1382.5 L1645.6,1393.5 L1656.6,1404.5" fill="none" stroke="#c3c6cd" stroke-width="1.8" stroke-linecap="round" stroke-linejoin="round" />
<text x="1677.70" y="1400.00" font-size="22.8" fill="#25272d" textLength="10.96" lengthAdjust="spacingAndGlyphs" stroke="#25272d" stroke-width="0.3">1</text>
<text x="1696.62" y="1400.00" font-size="22.8" fill="#5a5f7a" textLength="38.79" lengthAdjust="spacingAndGlyphs" stroke="#5a5f7a" stroke-width="0.3">đến</text>
<text x="1740.72" y="1400.00" font-size="22.8" fill="#25272d" textLength="12.76" lengthAdjust="spacingAndGlyphs" stroke="#25272d" stroke-width="0.3">9</text>
<path d="M1787.8,1382.5 L1798.8,1393.5 L1787.8,1404.5" fill="none" stroke="#3d4250" stroke-width="1.8" stroke-linecap="round" stroke-linejoin="round" />
<path d="M1830.6,1382.5 L1841.6,1393.5 L1830.6,1404.5 M1845.2,1382.5 V1404.5" fill="none" stroke="#3d4250" stroke-width="1.8" stroke-linecap="round" stroke-linejoin="round" />
<text x="1905.25" y="402.70" font-size="27" fill="#1f2128" textLength="237.83" lengthAdjust="spacingAndGlyphs" stroke="#1f2128" stroke-width="0.75">Goods Information</text>
<rect x="2162.8" y="376.8" width="42.6" height="34.2" fill="#e3e4e8" rx="6"/>
<text x="2176.20" y="402.00" font-size="23.5" fill="#2a2d33" textLength="14.57" lengthAdjust="spacingAndGlyphs" stroke="#2a2d33" stroke-width="0.4">4</text>
<circle cx="2348.2" cy="391.2" r="9.2" fill="none" stroke="#3d4250" stroke-width="2"/>
<path d="M2355,398 L2361.8,404.8" fill="none" stroke="#3d4250" stroke-width="2" stroke-linecap="round" stroke-linejoin="round" />
<path d="M2389.2,404.5 L2390,398.2 L2404.6,383.6 C2405.8,382.4 2407.6,382.4 2408.8,383.6 L2410.2,385 C2411.4,386.2 2411.4,388 2410.2,389.2 L2395.6,403.8 Z M2401.6,386.6 L2407.2,392.2" fill="none" stroke="#3d4250" stroke-width="2" stroke-linecap="round" stroke-linejoin="round" />
<text x="1906.60" y="457.70" font-size="23" fill="#1f2128" textLength="212.93" lengthAdjust="spacingAndGlyphs" stroke="#1f2128" stroke-width="0.65">#1. Acetic Anhydride</text>
<path d="M2392.4,445 L2400.2,452.8 L2408,445" fill="none" stroke="#3d4250" stroke-width="1.9" stroke-linecap="round" stroke-linejoin="round" />
<text x="1905.57" y="498.40" font-size="22.8" fill="#25272d" textLength="273.61" lengthAdjust="spacingAndGlyphs" stroke="#25272d" stroke-width="0.3">2 Jars x 200,000 = 400,000</text>
<text x="1905.72" y="540.30" font-size="22.8" fill="#5a5f6e" textLength="80.84" lengthAdjust="spacingAndGlyphs" stroke="#5a5f6e" stroke-width="0.3">- 40,000</text>
<path d="M1996.4,533.1 L2005.5,520.3 C2006.3,519.6 2007.2,519.4 2008.2,519.4 H2047.5 C2049.7,519.4 2051.5,521.2 2051.5,523.4 V542.8 C2051.5,545 2049.7,546.8 2047.5,546.8 H2008.2 C2007.2,546.8 2006.3,546.6 2005.5,545.9 Z" fill="#e3e4e8" />
<text x="2008.12" y="538.60" font-size="19" fill="#4d5260" textLength="36.33" lengthAdjust="spacingAndGlyphs" stroke="#4d5260" stroke-width="0.65">10%</text>
<text x="2065.20" y="540.30" font-size="22.8" fill="#5a5f6e" textLength="88.18" lengthAdjust="spacingAndGlyphs" stroke="#5a5f6e" stroke-width="0.3">+ 36,000</text>
<rect x="2163.5" y="519.4" width="89" height="27.4" fill="#e3e4e8" rx="5"/>
<text x="2170.72" y="538.60" font-size="19" fill="#4d5260" textLength="75.21" lengthAdjust="spacingAndGlyphs" stroke="#4d5260" stroke-width="0.65">VAT 10%</text>
<rect x="2358.0" y="488.20000000000005" width="55.4" height="55.8" fill="#fff" rx="9" stroke="#e6e7eb" stroke-width="1.2"/>
<path d="M2375.8,506.6 C2375.8,505.1 2376.8,504.0 2378.4,504.0 H2391.6 C2393.2000000000003,504.0 2394.2000000000003,505.1 2394.2000000000003,506.6 V535.1 C2394.2000000000003,536.0 2393.4,536.6 2392.4,536.6 H2377.6 C2376.6,536.6 2375.8,536.0 2375.8,535.1 Z" fill="#6e2d12" />
<rect x="2376.0" y="514.6" width="18" height="12.8" fill="#dcd3c9"/>
<rect x="2379.6" y="498.0" width="11.4" height="5.4" fill="#151515" rx="1.2"/>
<rect x="2381.0" y="492.0" width="8.4" height="9" fill="#151515" rx="1.5"/>
<text x="1905.82" y="582.20" font-size="22.8" fill="#2bb17f" textLength="83.07" lengthAdjust="spacingAndGlyphs" stroke="#2bb17f" stroke-width="0.3">396,000</text>
<path d="M2245,568 H2260.5 C2261.6,568 2262.4,568.8 2262.4,569.9 V583.2 H2250.3 M2245,583.2 C2244.4,583.2 2244.2,582.6 2244.2,582 V569.8 C2244.2,568.8 2245,568 2246,568 M2262.4,573.5 H2266.8 L2271.4,578.6 V583.2 H2269.2" fill="none" stroke="#3d4250" stroke-width="1.7" stroke-linecap="round" stroke-linejoin="round" />
<circle cx="2248" cy="584.2" r="2.2" fill="#fff" stroke="#3d4250" stroke-width="1.7"/>
<circle cx="2266" cy="584.2" r="2.2" fill="#fff" stroke="#3d4250" stroke-width="1.7"/>
<path d="M2248,572.6 H2254 M2248,577.4 H2257.5" fill="none" stroke="#3d4250" stroke-width="1.7" stroke-linecap="round" stroke-linejoin="round" />
<text x="2286.71" y="582.20" font-size="22.8" fill="#1f2128" textLength="11.92" lengthAdjust="spacingAndGlyphs" stroke="#1f2128" stroke-width="0.3">4</text>
<text x="2313.21" y="582.20" font-size="22.8" fill="#5a5f6e" textLength="129.85" lengthAdjust="spacingAndGlyphs" stroke="#5a5f6e" stroke-width="0.3">(WAREHOUS</text>
<rect x="1906.7" y="618.2" width="505.70000000000005" height="1.4" fill="#dcdee2"/>
<text x="1906.60" y="669.50" font-size="23" fill="#1f2128" textLength="165.63" lengthAdjust="spacingAndGlyphs" stroke="#1f2128" stroke-width="0.65">#2. Essential Oil</text>
<path d="M2392.4,656.8 L2400.2,664.6 L2408,656.8" fill="none" stroke="#3d4250" stroke-width="1.9" stroke-linecap="round" stroke-linejoin="round" />
<text x="1904.98" y="710.20" font-size="22.8" fill="#25272d" textLength="262.60" lengthAdjust="spacingAndGlyphs" stroke="#25272d" stroke-width="0.3">1 Jar x 100,000 = 100,000</text>
<text x="1905.72" y="752.10" font-size="22.8" fill="#5a5f6e" textLength="80.84" lengthAdjust="spacingAndGlyphs" stroke="#5a5f6e" stroke-width="0.3">- 10,000</text>
<path d="M1996.4,744.9000000000001 L2005.5,732.0999999999999 C2006.3,731.4000000000001 2007.2,731.2 2008.2,731.2 H2047.5 C2049.7,731.2 2051.5,733.0 2051.5,735.2 V754.5999999999999 C2051.5,756.8 2049.7,758.5999999999999 2047.5,758.5999999999999 H2008.2 C2007.2,758.5999999999999 2006.3,758.4000000000001 2005.5,757.7 Z" fill="#e3e4e8" />
<text x="2008.12" y="750.40" font-size="19" fill="#4d5260" textLength="36.33" lengthAdjust="spacingAndGlyphs" stroke="#4d5260" stroke-width="0.65">10%</text>
<text x="2065.20" y="752.10" font-size="22.8" fill="#5a5f6e" textLength="75.57" lengthAdjust="spacingAndGlyphs" stroke="#5a5f6e" stroke-width="0.3">+ 9,000</text>
<rect x="2149" y="731.2" width="89.6" height="27.4" fill="#e3e4e8" rx="5"/>
<text x="2156.22" y="750.40" font-size="19" fill="#4d5260" textLength="75.21" lengthAdjust="spacingAndGlyphs" stroke="#4d5260" stroke-width="0.65">VAT 10%</text>
<rect x="2358.0" y="700.0000000000001" width="55.4" height="55.8" fill="#fff" rx="9" stroke="#e6e7eb" stroke-width="1.2"/>
<path d="M2378.3,716.9000000000001 C2378.3,714.4000000000001 2379.9,712.4000000000001 2382.4,712.2 H2388.6 C2391.1,712.4000000000001 2392.7000000000003,714.4000000000001 2392.7000000000003,716.9000000000001 V739.9000000000001 C2392.7000000000003,741.4000000000001 2391.7000000000003,742.4000000000001 2390.2000000000003,742.4000000000001 H2380.8 C2379.3,742.4000000000001 2378.3,741.4000000000001 2378.3,739.9000000000001 Z" fill="#5e2c12" />
<rect x="2378.5" y="716.2" width="14" height="21.8" fill="#eef1e6"/>
<path d="M2379.4,734.9000000000001 C2381.9,731.4000000000001 2385.4,729.4000000000001 2390.4,727.9000000000001 C2388.4,731.9000000000001 2384.4,734.4000000000001 2379.4,734.9000000000001 Z" fill="#7aa05a" />
<path d="M2383.4,720.4000000000001 L2385.6,717.9000000000001 L2387.8,720.4000000000001 Z" fill="#9ab86a" />
<rect x="2383.0" y="703.7" width="5.9" height="8.6" fill="#151515" rx="1.2"/>
<text x="1905.63" y="794.00" font-size="22.8" fill="#2bb17f" textLength="69.97" lengthAdjust="spacingAndGlyphs" stroke="#2bb17f" stroke-width="0.3">99,000</text>
<path d="M2245,779.8 H2260.5 C2261.6,779.8 2262.4,780.5999999999999 2262.4,781.7 V795.0 H2250.3 M2245,795.0 C2244.4,795.0 2244.2,794.4000000000001 2244.2,793.8 V781.5999999999999 C2244.2,780.5999999999999 2245,779.8 2246,779.8 M2262.4,785.3 H2266.8 L2271.4,790.4000000000001 V795.0 H2269.2" fill="none" stroke="#3d4250" stroke-width="1.7" stroke-linecap="round" stroke-linejoin="round" />
<circle cx="2248" cy="796.0" r="2.2" fill="#fff" stroke="#3d4250" stroke-width="1.7"/>
<circle cx="2266" cy="796.0" r="2.2" fill="#fff" stroke="#3d4250" stroke-width="1.7"/>
<path d="M2248,784.4000000000001 H2254 M2248,789.2 H2257.5" fill="none" stroke="#3d4250" stroke-width="1.7" stroke-linecap="round" stroke-linejoin="round" />
<text x="2286.71" y="794.00" font-size="22.8" fill="#1f2128" textLength="11.92" lengthAdjust="spacingAndGlyphs" stroke="#1f2128" stroke-width="0.3">4</text>
<text x="2313.21" y="794.00" font-size="22.8" fill="#5a5f6e" textLength="129.85" lengthAdjust="spacingAndGlyphs" stroke="#5a5f6e" stroke-width="0.3">(WAREHOUS</text>
<rect x="1906.7" y="830.0" width="505.70000000000005" height="1.4" fill="#dcdee2"/>
<text x="1906.92" y="1378.20" font-size="22.8" fill="#25272d" textLength="109.98" lengthAdjust="spacingAndGlyphs" stroke="#25272d" stroke-width="0.3">Quantity: 3</text>
<text x="2441.07" y="1378.20" font-size="22.8" fill="#25272d" textLength="192.84" lengthAdjust="spacingAndGlyphs" text-anchor="end" stroke="#25272d" stroke-width="0.3">Quantity Delivered:</text>
<text x="1907.48" y="1419.00" font-size="22.8" fill="#1f2128" textLength="137.99" lengthAdjust="spacingAndGlyphs" stroke="#1f2128" stroke-width="0.65">Total Amount</text>
<text x="2412.50" y="1419.00" font-size="22.8" fill="#2bb17f" textLength="83.02" lengthAdjust="spacingAndGlyphs" text-anchor="end" stroke="#2bb17f" stroke-width="0.3">495,000</text></svg>
</body></html>
